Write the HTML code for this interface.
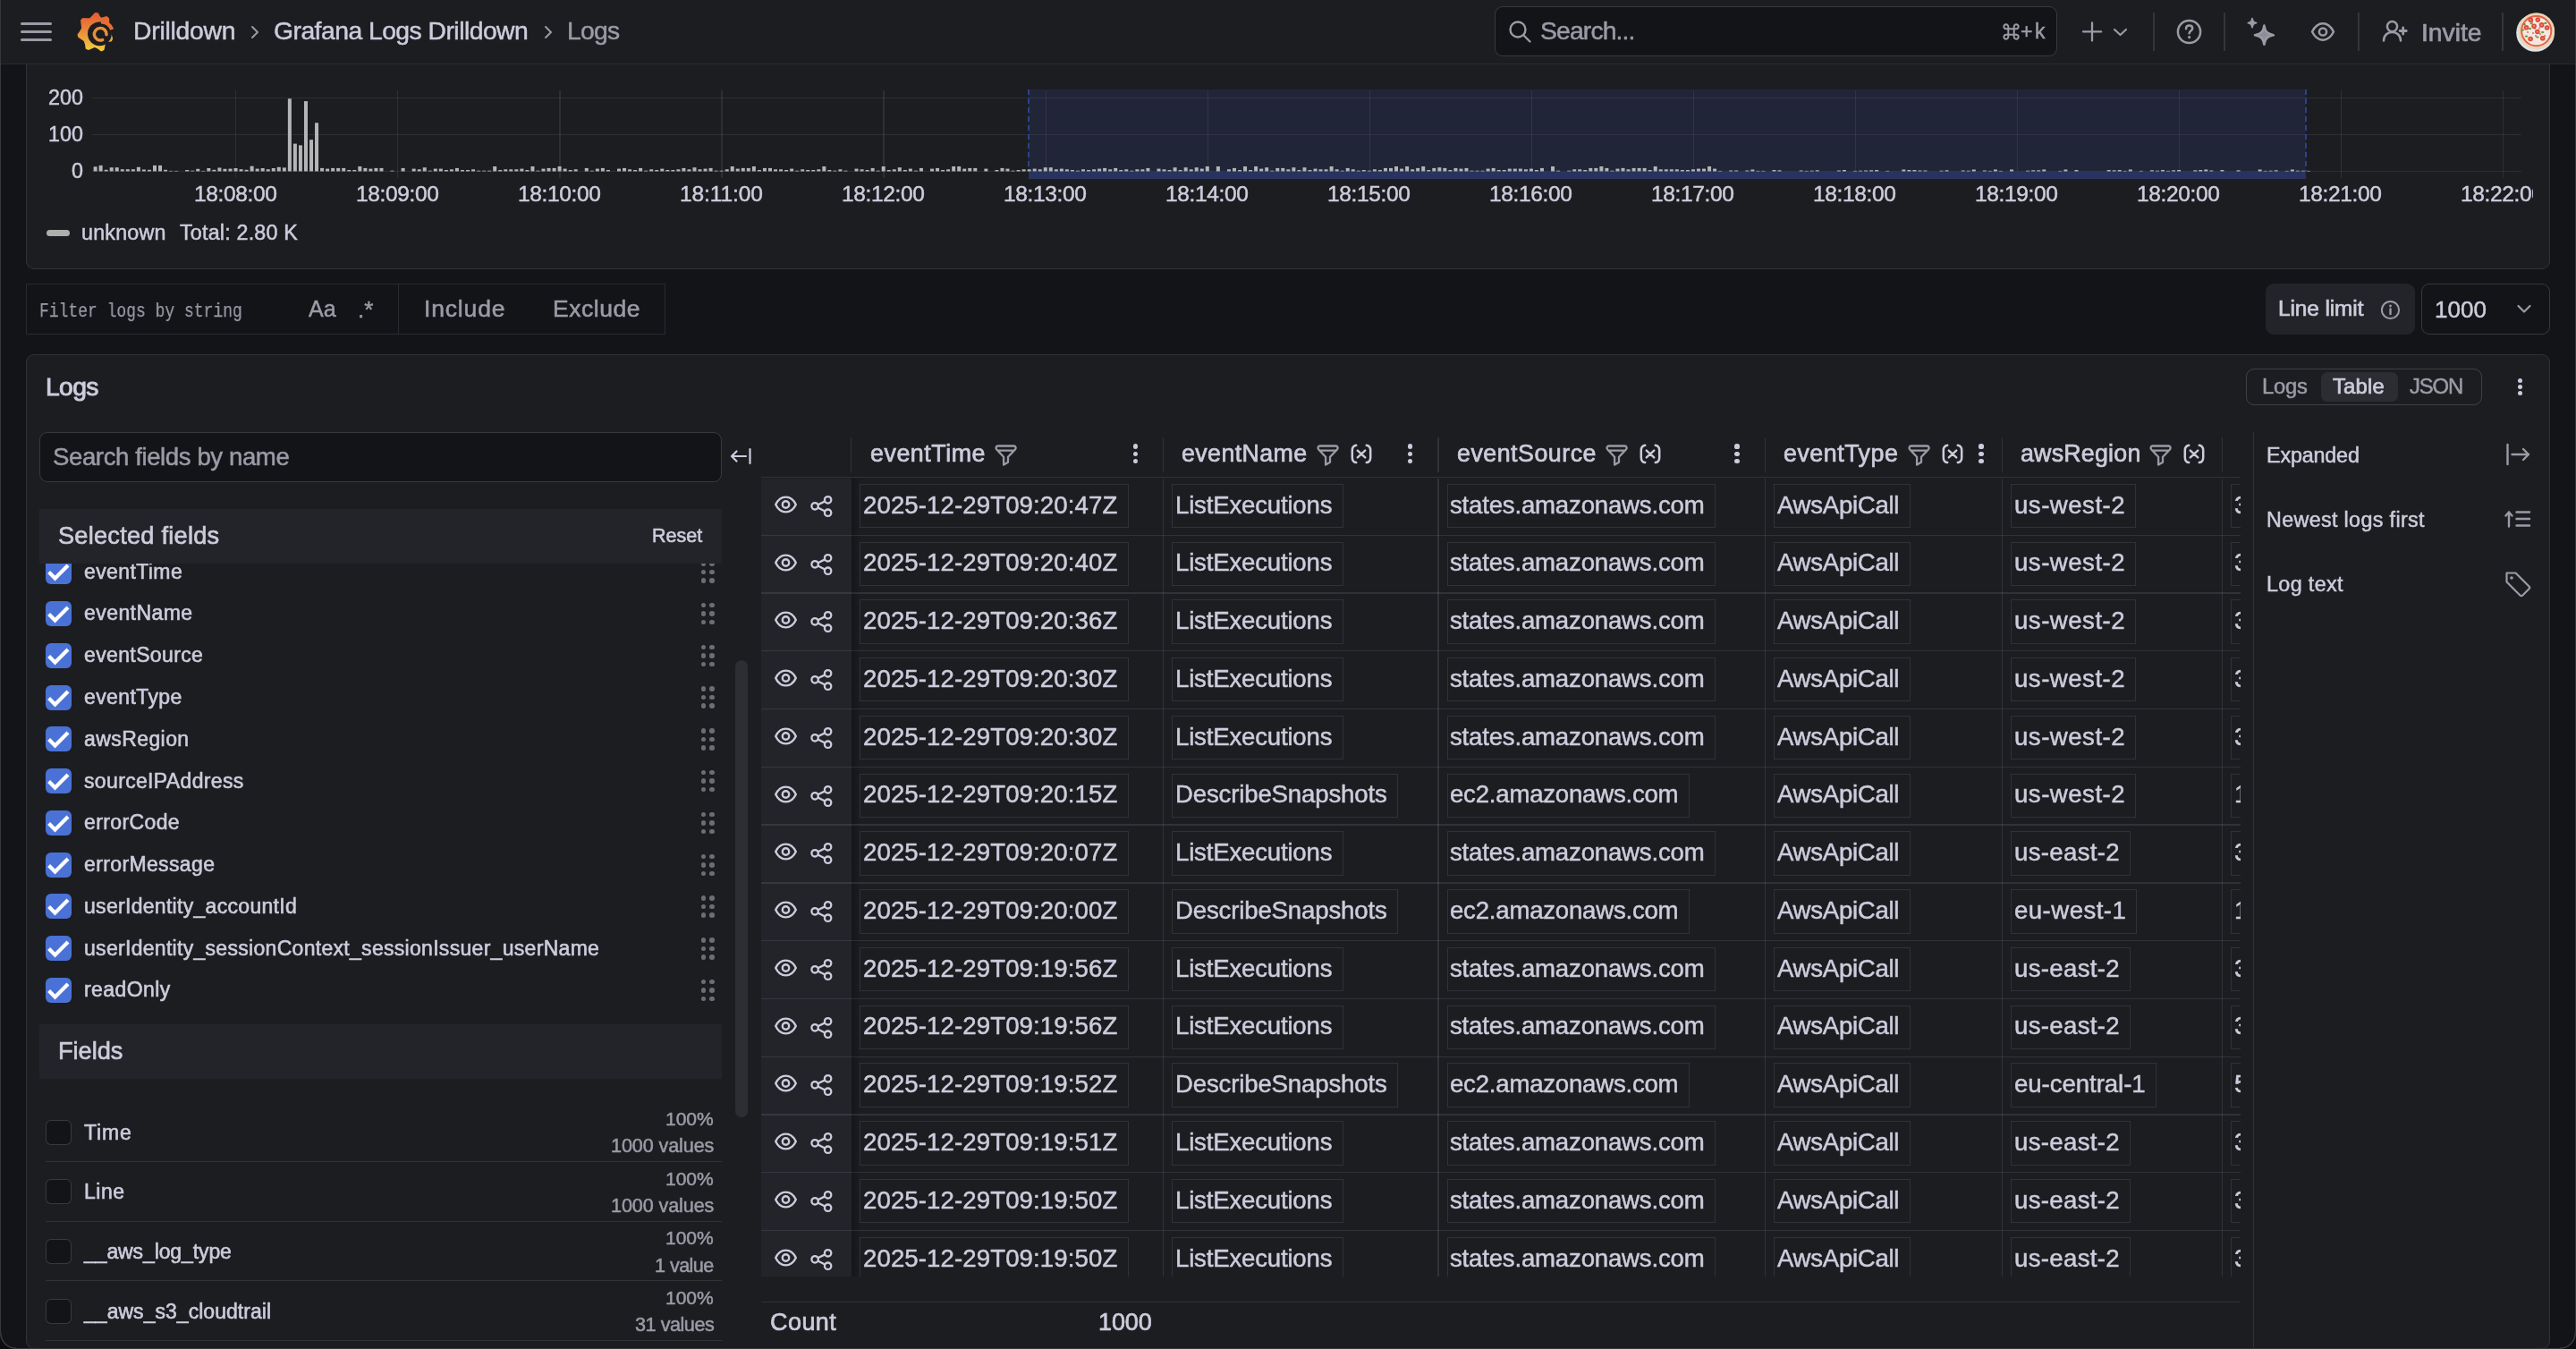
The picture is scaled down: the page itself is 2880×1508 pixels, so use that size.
<!DOCTYPE html><html><head><meta charset="utf-8"><style>
html,body{margin:0;padding:0;}
body{width:2880px;height:1508px;overflow:hidden;position:relative;background:#131418;font-family:"Liberation Sans",sans-serif;}
.t{position:absolute;white-space:nowrap;will-change:transform;}
</style></head><body>
<div style="position:absolute;left:29.00px;top:40.00px;width:2822.00px;height:261.00px;box-sizing:border-box;background:#1c1d21;border:1.5px solid rgba(204,204,220,0.12);border-radius:9px;"></div>
<div style="position:absolute;left:0.00px;top:0.00px;width:2880.00px;height:71.00px;background:#1c1d21;"></div>
<div style="position:absolute;left:0.00px;top:71.00px;width:2880.00px;height:1.00px;background:#2a2b30;"></div>
<div style="position:absolute;left:22.70px;top:24.85px;width:35.80px;height:3.50px;background:#9a9ba6;border-radius:2px;"></div>
<div style="position:absolute;left:22.70px;top:33.85px;width:35.80px;height:3.50px;background:#9a9ba6;border-radius:2px;"></div>
<div style="position:absolute;left:22.70px;top:42.95px;width:35.80px;height:3.50px;background:#9a9ba6;border-radius:2px;"></div>
<svg style="position:absolute;left:80.00px;top:8.00px;" width="54.00" height="54.00" viewBox="80 8 54 54" fill="none"><defs><linearGradient id="lg" x1="0" y1="0" x2="0" y2="1"><stop offset="0" stop-color="#e35a32"/><stop offset="0.45" stop-color="#e8883a"/><stop offset="1" stop-color="#f2cf3c"/></linearGradient></defs>
<path fill="url(#lg)" d="M90.05 22.47 L92.45 20.03 Q97.16 20.61 100.40 20.18 L106.22 13.95 L109.77 14.19 Q111.44 18.02 113.15 19.72 L119.40 18.11 L122.11 20.40 Q122.02 27.56 122.84 32.47 L126.23 43.25 L124.85 46.30 Q120.59 47.01 118.11 48.28 L116.42 56.07 L113.13 57.40 Q108.89 53.98 105.89 53.11 L98.75 55.88 L95.71 54.40 Q95.20 48.92 93.75 45.95 L87.17 41.56 L86.56 38.41 Q89.56 34.65 91.13 31.57 Z"/>
<circle cx="111.4" cy="37.8" r="13.4" fill="#1c1d21"/>
<path d="M113 24.2 A13.4 13.4 0 0 1 125.2 33" stroke="#e36f35" stroke-width="4.4" fill="none"/>
<path d="M114.6 44.6 A6.8 6.8 0 1 1 119 38.6" stroke="#e98f38" stroke-width="3.6" fill="none" stroke-linecap="round"/>
<circle cx="112.2" cy="38.2" r="4.8" fill="#1c1d21"/></svg>
<div class="t" style="left:148.60px;top:20.34px;font-size:28.30px;line-height:28.30px;color:#ccccdc;font-family:'Liberation Sans',sans-serif;letter-spacing:-0.235px;-webkit-text-stroke:0.5px currentColor;">Drilldown</div>
<svg style="position:absolute;left:279.00px;top:28.00px;" width="12.00" height="16.00" viewBox="0 0 12 16" fill="none"><path d="M3 2 L9 8 L3 14" stroke="#9a9ba6" stroke-width="2" stroke-linecap="round" stroke-linejoin="round"/></svg>
<div class="t" style="left:306.10px;top:20.34px;font-size:28.30px;line-height:28.30px;color:#ccccdc;font-family:'Liberation Sans',sans-serif;letter-spacing:-0.521px;-webkit-text-stroke:0.5px currentColor;">Grafana Logs Drilldown</div>
<svg style="position:absolute;left:607.00px;top:28.00px;" width="12.00" height="16.00" viewBox="0 0 12 16" fill="none"><path d="M3 2 L9 8 L3 14" stroke="#9a9ba6" stroke-width="2" stroke-linecap="round" stroke-linejoin="round"/></svg>
<div class="t" style="left:634.10px;top:20.34px;font-size:28.30px;line-height:28.30px;color:#9a9ba6;font-family:'Liberation Sans',sans-serif;letter-spacing:-0.723px;-webkit-text-stroke:0.5px currentColor;">Logs</div>
<div style="position:absolute;left:1671.00px;top:7.00px;width:629.00px;height:56.00px;box-sizing:border-box;background:#131418;border:1.5px solid rgba(204,204,220,0.20);border-radius:9px;"></div>
<svg style="position:absolute;left:1686.00px;top:22.00px;" width="27.00" height="27.00" viewBox="0 0 27 27" fill="none"><circle cx="11" cy="11" r="8.5" stroke="#9a9ba6" stroke-width="2.4"/><path d="M17.5 17.5 L24.5 24.5" stroke="#9a9ba6" stroke-width="2.4" stroke-linecap="round"/></svg>
<div class="t" style="left:1721.60px;top:20.24px;font-size:28.30px;line-height:28.30px;color:#9a9ba6;font-family:'Liberation Sans',sans-serif;letter-spacing:-0.845px;-webkit-text-stroke:0.5px currentColor;">Search...</div>
<svg style="position:absolute;left:2239.00px;top:26.00px;" width="19.00" height="19.00" viewBox="0 0 19 19" fill="none"><path d="M6.3 6.3 H12.7 V12.7 H6.3 Z M6.3 6.3 V3.9 A2.5 2.5 0 1 0 3.8 6.3 Z M12.7 6.3 V3.9 A2.5 2.5 0 1 1 15.2 6.3 Z M6.3 12.7 V15.1 A2.5 2.5 0 1 1 3.8 12.7 Z M12.7 12.7 V15.1 A2.5 2.5 0 1 0 15.2 12.7 Z" stroke="#9a9ba6" stroke-width="2" stroke-linejoin="round"/></svg>
<div class="t" style="left:2258.60px;top:24.13px;font-size:23.00px;line-height:23.00px;color:#9a9ba6;font-family:'Liberation Sans',sans-serif;letter-spacing:2.568px;-webkit-text-stroke:0.5px currentColor;">+k</div>
<svg style="position:absolute;left:2327.00px;top:23.00px;" width="25.00" height="25.00" viewBox="0 0 25 25" fill="none"><path d="M12 2.4 V22.6 M2 12.4 H22.2" stroke="#9a9ba6" stroke-width="2.3" stroke-linecap="round"/></svg>
<svg style="position:absolute;left:2362.00px;top:30.00px;" width="17.00" height="12.00" viewBox="0 0 17 12" fill="none"><path d="M2 3 L8.5 9 L15 3" stroke="#9a9ba6" stroke-width="2.2" stroke-linecap="round" stroke-linejoin="round"/></svg>
<div style="position:absolute;left:2407.00px;top:14.00px;width:2.00px;height:43.00px;background:#34353b;"></div>
<div style="position:absolute;left:2486.00px;top:14.00px;width:2.00px;height:43.00px;background:#34353b;"></div>
<div style="position:absolute;left:2636.00px;top:14.00px;width:2.00px;height:43.00px;background:#34353b;"></div>
<div style="position:absolute;left:2797.00px;top:14.00px;width:2.00px;height:43.00px;background:#34353b;"></div>
<svg style="position:absolute;left:2432.00px;top:20.00px;" width="31.00" height="31.00" viewBox="0 0 31 31" fill="none"><circle cx="15.5" cy="15.5" r="12.6" stroke="#9a9ba6" stroke-width="2.5"/><path d="M12 12.2 C12 9.8 13.6 8.6 15.6 8.6 C17.6 8.6 19.2 9.9 19.2 11.8 C19.2 14.4 15.6 14.6 15.6 17.2" stroke="#9a9ba6" stroke-width="2.5" stroke-linecap="round" fill="none"/><circle cx="15.6" cy="21.6" r="1.6" fill="#9a9ba6"/></svg>
<svg style="position:absolute;left:2508.00px;top:17.00px;" width="40.00" height="37.00" viewBox="0 0 40 37" fill="none"><path d="M23.4 11.6 C24.6 18.6 26.4 20.6 33.8 22.2 C26.4 23.8 24.6 25.8 23.4 32.8 C22.2 25.8 20.4 23.8 13 22.2 C20.4 20.6 22.2 18.6 23.4 11.6 Z" fill="#8c8d97" stroke="#9a9ba6" stroke-width="2.6" stroke-linejoin="round"/><path d="M10 3.6 C10.6 6.8 11.4 7.8 14.6 8.6 C11.4 9.4 10.6 10.4 10 13.6 C9.4 10.4 8.6 9.4 5.4 8.6 C8.6 7.8 9.4 6.8 10 3.6 Z" fill="#9a9ba6" stroke="#9a9ba6" stroke-width="1.8" stroke-linejoin="round"/></svg>
<svg style="position:absolute;left:2582.00px;top:23.00px;" width="30.00" height="25.00" viewBox="0 0 30 25" fill="none"><path d="M3 12.5 C6.3 6 10.5 3.3 15 3.3 C19.5 3.3 23.7 6 27 12.5 C23.7 19 19.5 21.7 15 21.7 C10.5 21.7 6.3 19 3 12.5 Z" stroke="#9a9ba6" stroke-width="2.5" stroke-linejoin="round"/><circle cx="15" cy="12.5" r="4.1" stroke="#9a9ba6" stroke-width="2.5"/></svg>
<svg style="position:absolute;left:2661.00px;top:22.00px;" width="32.00" height="27.00" viewBox="0 0 32 27" fill="none"><circle cx="13.5" cy="7.6" r="5.6" stroke="#9a9ba6" stroke-width="2.5"/><path d="M4 23.6 C4 17.6 8.2 13.9 13.5 13.9 C18.8 13.9 23 17.6 23 23.6" stroke="#9a9ba6" stroke-width="2.5" stroke-linecap="round"/><path d="M25.7 8.9 V16.1 M22.1 12.5 H29.3" stroke="#9a9ba6" stroke-width="2.8" stroke-linecap="round"/></svg>
<div class="t" style="left:2706.60px;top:21.74px;font-size:28.30px;line-height:28.30px;color:#9a9ba6;font-family:'Liberation Sans',sans-serif;letter-spacing:-0.028px;-webkit-text-stroke:0.7px currentColor;">Invite</div>
<svg style="position:absolute;left:2812.00px;top:12.00px;" width="47.00" height="47.00" viewBox="0 0 47 47" fill="none"><ellipse cx="22.6" cy="24.6" rx="21.4" ry="21.2" fill="#dbe4e9"/><circle cx="23.7" cy="22.6" r="20.4" fill="#edd3b6"/><circle cx="23.7" cy="22.6" r="17.6" fill="#e46246"/><circle cx="23.7" cy="22.6" r="15.6" fill="#f1e9e1"/><circle cx="19.0" cy="12.5" r="1" fill="#e66a55"/><circle cx="22.0" cy="20.0" r="1" fill="#e66a55"/><circle cx="27.0" cy="19.5" r="1" fill="#e66a55"/><circle cx="20.0" cy="25.0" r="1" fill="#e66a55"/><circle cx="14.0" cy="24.0" r="1" fill="#e66a55"/><circle cx="28.0" cy="26.0" r="1" fill="#e66a55"/><circle cx="33.0" cy="28.0" r="1" fill="#e66a55"/><circle cx="23.0" cy="28.0" r="1" fill="#e66a55"/><circle cx="17.3" cy="10.3" r="2.8" fill="#df4a36"/><circle cx="17.3" cy="10.3" r="1.1" fill="#f08a78"/><circle cx="25.3" cy="10.1" r="2.8" fill="#df4a36"/><circle cx="25.3" cy="10.1" r="1.1" fill="#f08a78"/><circle cx="12.5" cy="18.8" r="2.8" fill="#df4a36"/><circle cx="12.5" cy="18.8" r="1.1" fill="#f08a78"/><circle cx="21.1" cy="17.2" r="2.8" fill="#df4a36"/><circle cx="21.1" cy="17.2" r="1.1" fill="#f08a78"/><circle cx="29.6" cy="15.9" r="2.8" fill="#df4a36"/><circle cx="29.6" cy="15.9" r="1.1" fill="#f08a78"/><circle cx="35.6" cy="19.0" r="2.8" fill="#df4a36"/><circle cx="35.6" cy="19.0" r="1.1" fill="#f08a78"/><circle cx="24.9" cy="23.5" r="2.8" fill="#df4a36"/><circle cx="24.9" cy="23.5" r="1.1" fill="#f08a78"/><circle cx="17.1" cy="31.5" r="2.8" fill="#df4a36"/><circle cx="17.1" cy="31.5" r="1.1" fill="#f08a78"/><circle cx="30.7" cy="30.8" r="2.8" fill="#df4a36"/><circle cx="30.7" cy="30.8" r="1.1" fill="#f08a78"/><ellipse cx="10.2" cy="15.2" rx="1.7" ry="1.1" fill="#5d9a45"/><ellipse cx="18.2" cy="14.3" rx="1.7" ry="1.1" fill="#5d9a45"/><ellipse cx="33.8" cy="13.9" rx="1.7" ry="1.1" fill="#5d9a45"/><ellipse cx="8.5" cy="21.5" rx="1.7" ry="1.1" fill="#5d9a45"/><ellipse cx="16.5" cy="20.1" rx="1.7" ry="1.1" fill="#5d9a45"/><ellipse cx="30.7" cy="24.1" rx="1.7" ry="1.1" fill="#5d9a45"/><ellipse cx="12.5" cy="28.6" rx="1.7" ry="1.1" fill="#5d9a45"/><ellipse cx="24.9" cy="29.5" rx="1.7" ry="1.1" fill="#5d9a45"/></svg>
<div style="position:absolute;left:103.00px;top:109.00px;width:2715.50px;height:1.20px;background:rgba(204,204,220,0.10);"></div>
<div style="position:absolute;left:103.00px;top:150.10px;width:2715.50px;height:1.20px;background:rgba(204,204,220,0.10);"></div>
<div style="position:absolute;left:103.00px;top:191.00px;width:2715.50px;height:1.20px;background:rgba(204,204,220,0.10);"></div>
<div style="position:absolute;left:263.20px;top:101.00px;width:1.20px;height:98.00px;background:rgba(204,204,220,0.10);"></div>
<div style="position:absolute;left:444.26px;top:101.00px;width:1.20px;height:98.00px;background:rgba(204,204,220,0.10);"></div>
<div style="position:absolute;left:625.32px;top:101.00px;width:1.20px;height:98.00px;background:rgba(204,204,220,0.10);"></div>
<div style="position:absolute;left:806.38px;top:101.00px;width:1.20px;height:98.00px;background:rgba(204,204,220,0.10);"></div>
<div style="position:absolute;left:987.44px;top:101.00px;width:1.20px;height:98.00px;background:rgba(204,204,220,0.10);"></div>
<div style="position:absolute;left:1168.50px;top:101.00px;width:1.20px;height:98.00px;background:rgba(204,204,220,0.10);"></div>
<div style="position:absolute;left:1349.56px;top:101.00px;width:1.20px;height:98.00px;background:rgba(204,204,220,0.10);"></div>
<div style="position:absolute;left:1530.62px;top:101.00px;width:1.20px;height:98.00px;background:rgba(204,204,220,0.10);"></div>
<div style="position:absolute;left:1711.68px;top:101.00px;width:1.20px;height:98.00px;background:rgba(204,204,220,0.10);"></div>
<div style="position:absolute;left:1892.74px;top:101.00px;width:1.20px;height:98.00px;background:rgba(204,204,220,0.10);"></div>
<div style="position:absolute;left:2073.80px;top:101.00px;width:1.20px;height:98.00px;background:rgba(204,204,220,0.10);"></div>
<div style="position:absolute;left:2254.86px;top:101.00px;width:1.20px;height:98.00px;background:rgba(204,204,220,0.10);"></div>
<div style="position:absolute;left:2435.92px;top:101.00px;width:1.20px;height:98.00px;background:rgba(204,204,220,0.10);"></div>
<div style="position:absolute;left:2616.98px;top:101.00px;width:1.20px;height:98.00px;background:rgba(204,204,220,0.10);"></div>
<div style="position:absolute;left:2798.04px;top:101.00px;width:1.20px;height:98.00px;background:rgba(204,204,220,0.10);"></div>
<div style="position:absolute;left:1150.00px;top:100.20px;width:1428.00px;height:99.40px;background:rgba(70,95,215,0.13);"></div>
<div style="position:absolute;left:1150.00px;top:191.20px;width:1428.00px;height:8.50px;background:#28345f;"></div>
<div style="position:absolute;left:1149.00px;top:100.00px;width:2.00px;height:91.00px;background:repeating-linear-gradient(to bottom,#2c4189 0px,#2c4189 6px,transparent 6px,transparent 10px);"></div>
<div style="position:absolute;left:2577.00px;top:100.00px;width:2.00px;height:91.00px;background:repeating-linear-gradient(to bottom,#2c4189 0px,#2c4189 6px,transparent 6px,transparent 10px);"></div>
<svg style="position:absolute;left:103.00px;top:100.00px;" width="2480.00" height="92.00" viewBox="0 0 2480 92" fill="none"><g fill="#b4b5b6"><rect x="1.60" y="86.30" width="4" height="5.20"/><rect x="7.63" y="84.90" width="4" height="6.60"/><rect x="13.67" y="89.80" width="4" height="1.70"/><rect x="19.70" y="87.20" width="4" height="4.30"/><rect x="25.74" y="87.20" width="4" height="4.30"/><rect x="31.78" y="89.20" width="4" height="2.30"/><rect x="37.81" y="89.20" width="4" height="2.30"/><rect x="43.84" y="89.20" width="4" height="2.30"/><rect x="49.88" y="86.80" width="4" height="4.70"/><rect x="55.91" y="89.50" width="4" height="2.00"/><rect x="61.95" y="89.80" width="4" height="1.70"/><rect x="67.99" y="84.90" width="4" height="6.60"/><rect x="74.02" y="84.90" width="4" height="6.60"/><rect x="80.06" y="89.80" width="4" height="1.70"/><rect x="86.09" y="90.90" width="4" height="0.60"/><rect x="92.12" y="90.90" width="4" height="0.60"/><rect x="104.19" y="90.00" width="4" height="1.50"/><rect x="110.23" y="90.70" width="4" height="0.80"/><rect x="116.26" y="88.80" width="4" height="2.70"/><rect x="122.30" y="90.90" width="4" height="0.60"/><rect x="128.33" y="88.00" width="4" height="3.50"/><rect x="134.37" y="89.80" width="4" height="1.70"/><rect x="140.41" y="87.50" width="4" height="4.00"/><rect x="146.44" y="88.80" width="4" height="2.70"/><rect x="152.48" y="88.60" width="4" height="2.90"/><rect x="158.51" y="88.00" width="4" height="3.50"/><rect x="164.54" y="89.20" width="4" height="2.30"/><rect x="170.58" y="89.80" width="4" height="1.70"/><rect x="176.62" y="85.70" width="4" height="5.80"/><rect x="182.65" y="88.60" width="4" height="2.90"/><rect x="188.69" y="88.00" width="4" height="3.50"/><rect x="194.72" y="89.20" width="4" height="2.30"/><rect x="200.75" y="88.00" width="4" height="3.50"/><rect x="206.79" y="86.80" width="4" height="4.70"/><rect x="212.82" y="87.40" width="4" height="4.10"/><rect x="218.86" y="10.30" width="4" height="81.20"/><rect x="224.89" y="60.60" width="4" height="30.90"/><rect x="230.93" y="62.40" width="4" height="29.10"/><rect x="236.97" y="13.10" width="4" height="78.40"/><rect x="243.00" y="56.20" width="4" height="35.30"/><rect x="249.03" y="37.30" width="4" height="54.20"/><rect x="255.07" y="87.90" width="4" height="3.60"/><rect x="261.11" y="88.60" width="4" height="2.90"/><rect x="267.14" y="87.90" width="4" height="3.60"/><rect x="273.17" y="87.90" width="4" height="3.60"/><rect x="279.21" y="87.90" width="4" height="3.60"/><rect x="285.25" y="90.00" width="4" height="1.50"/><rect x="291.28" y="90.00" width="4" height="1.50"/><rect x="297.32" y="86.00" width="4" height="5.50"/><rect x="303.35" y="87.90" width="4" height="3.60"/><rect x="309.38" y="88.60" width="4" height="2.90"/><rect x="315.42" y="87.90" width="4" height="3.60"/><rect x="321.46" y="87.90" width="4" height="3.60"/><rect x="333.52" y="90.70" width="4" height="0.80"/><rect x="345.60" y="87.90" width="4" height="3.60"/><rect x="357.66" y="88.60" width="4" height="2.90"/><rect x="363.70" y="89.30" width="4" height="2.20"/><rect x="369.74" y="87.20" width="4" height="4.30"/><rect x="375.77" y="90.70" width="4" height="0.80"/><rect x="381.80" y="88.60" width="4" height="2.90"/><rect x="387.84" y="88.60" width="4" height="2.90"/><rect x="393.88" y="90.00" width="4" height="1.50"/><rect x="399.91" y="89.30" width="4" height="2.20"/><rect x="405.95" y="87.90" width="4" height="3.60"/><rect x="411.98" y="90.00" width="4" height="1.50"/><rect x="418.01" y="90.00" width="4" height="1.50"/><rect x="424.05" y="89.30" width="4" height="2.20"/><rect x="430.09" y="90.70" width="4" height="0.80"/><rect x="436.12" y="90.70" width="4" height="0.80"/><rect x="442.15" y="90.70" width="4" height="0.80"/><rect x="448.19" y="86.00" width="4" height="5.50"/><rect x="454.23" y="90.00" width="4" height="1.50"/><rect x="460.26" y="89.30" width="4" height="2.20"/><rect x="466.29" y="89.30" width="4" height="2.20"/><rect x="472.33" y="89.30" width="4" height="2.20"/><rect x="478.37" y="88.60" width="4" height="2.90"/><rect x="484.40" y="90.00" width="4" height="1.50"/><rect x="490.44" y="86.00" width="4" height="5.50"/><rect x="496.47" y="90.70" width="4" height="0.80"/><rect x="502.50" y="88.60" width="4" height="2.90"/><rect x="508.54" y="87.90" width="4" height="3.60"/><rect x="514.58" y="87.90" width="4" height="3.60"/><rect x="520.61" y="86.00" width="4" height="5.50"/><rect x="526.64" y="88.60" width="4" height="2.90"/><rect x="532.68" y="90.00" width="4" height="1.50"/><rect x="538.72" y="89.30" width="4" height="2.20"/><rect x="550.79" y="87.90" width="4" height="3.60"/><rect x="556.82" y="90.70" width="4" height="0.80"/><rect x="562.86" y="88.60" width="4" height="2.90"/><rect x="568.89" y="87.90" width="4" height="3.60"/><rect x="574.93" y="90.00" width="4" height="1.50"/><rect x="587.00" y="88.60" width="4" height="2.90"/><rect x="593.03" y="87.90" width="4" height="3.60"/><rect x="599.07" y="89.30" width="4" height="2.20"/><rect x="605.10" y="90.00" width="4" height="1.50"/><rect x="611.13" y="87.90" width="4" height="3.60"/><rect x="617.17" y="90.70" width="4" height="0.80"/><rect x="623.21" y="89.30" width="4" height="2.20"/><rect x="629.24" y="90.00" width="4" height="1.50"/><rect x="635.28" y="88.60" width="4" height="2.90"/><rect x="641.31" y="90.00" width="4" height="1.50"/><rect x="647.35" y="90.00" width="4" height="1.50"/><rect x="653.38" y="89.30" width="4" height="2.20"/><rect x="659.42" y="87.90" width="4" height="3.60"/><rect x="665.45" y="89.30" width="4" height="2.20"/><rect x="671.49" y="87.20" width="4" height="4.30"/><rect x="677.52" y="89.30" width="4" height="2.20"/><rect x="683.56" y="88.60" width="4" height="2.90"/><rect x="689.59" y="87.90" width="4" height="3.60"/><rect x="695.62" y="90.70" width="4" height="0.80"/><rect x="701.66" y="90.70" width="4" height="0.80"/><rect x="707.70" y="89.30" width="4" height="2.20"/><rect x="713.73" y="86.00" width="4" height="5.50"/><rect x="719.76" y="88.60" width="4" height="2.90"/><rect x="725.80" y="87.90" width="4" height="3.60"/><rect x="731.84" y="87.90" width="4" height="3.60"/><rect x="737.87" y="86.00" width="4" height="5.50"/><rect x="743.91" y="90.00" width="4" height="1.50"/><rect x="749.94" y="87.90" width="4" height="3.60"/><rect x="755.98" y="87.90" width="4" height="3.60"/><rect x="762.01" y="89.30" width="4" height="2.20"/><rect x="768.05" y="89.30" width="4" height="2.20"/><rect x="774.08" y="90.00" width="4" height="1.50"/><rect x="780.12" y="88.60" width="4" height="2.90"/><rect x="786.15" y="90.70" width="4" height="0.80"/><rect x="792.19" y="89.30" width="4" height="2.20"/><rect x="798.22" y="90.00" width="4" height="1.50"/><rect x="804.25" y="90.00" width="4" height="1.50"/><rect x="810.29" y="89.30" width="4" height="2.20"/><rect x="816.33" y="86.00" width="4" height="5.50"/><rect x="822.36" y="90.00" width="4" height="1.50"/><rect x="828.40" y="90.70" width="4" height="0.80"/><rect x="834.43" y="89.30" width="4" height="2.20"/><rect x="840.47" y="90.70" width="4" height="0.80"/><rect x="852.54" y="88.60" width="4" height="2.90"/><rect x="858.57" y="89.30" width="4" height="2.20"/><rect x="864.61" y="90.00" width="4" height="1.50"/><rect x="870.64" y="87.90" width="4" height="3.60"/><rect x="876.68" y="90.70" width="4" height="0.80"/><rect x="882.71" y="86.00" width="4" height="5.50"/><rect x="888.75" y="90.00" width="4" height="1.50"/><rect x="894.78" y="89.30" width="4" height="2.20"/><rect x="900.82" y="87.20" width="4" height="4.30"/><rect x="906.85" y="90.00" width="4" height="1.50"/><rect x="912.88" y="88.60" width="4" height="2.90"/><rect x="918.92" y="90.70" width="4" height="0.80"/><rect x="924.95" y="87.90" width="4" height="3.60"/><rect x="937.03" y="88.60" width="4" height="2.90"/><rect x="943.06" y="87.90" width="4" height="3.60"/><rect x="949.10" y="90.00" width="4" height="1.50"/><rect x="955.13" y="89.30" width="4" height="2.20"/><rect x="961.16" y="86.00" width="4" height="5.50"/><rect x="967.20" y="86.00" width="4" height="5.50"/><rect x="973.23" y="88.60" width="4" height="2.90"/><rect x="979.27" y="87.90" width="4" height="3.60"/><rect x="985.31" y="87.90" width="4" height="3.60"/><rect x="997.38" y="88.60" width="4" height="2.90"/><rect x="1009.44" y="90.00" width="4" height="1.50"/><rect x="1015.48" y="87.90" width="4" height="3.60"/><rect x="1021.52" y="88.60" width="4" height="2.90"/><rect x="1027.55" y="90.70" width="4" height="0.80"/><rect x="1033.59" y="90.00" width="4" height="1.50"/><rect x="1039.62" y="89.30" width="4" height="2.20"/><rect x="1045.65" y="89.30" width="4" height="2.20"/><rect x="1051.69" y="88.60" width="4" height="2.90"/><rect x="1057.72" y="89.30" width="4" height="2.20"/><rect x="1063.76" y="87.20" width="4" height="4.30"/><rect x="1069.79" y="87.20" width="4" height="4.30"/><rect x="1075.83" y="89.30" width="4" height="2.20"/><rect x="1081.87" y="88.60" width="4" height="2.90"/><rect x="1087.90" y="89.30" width="4" height="2.20"/><rect x="1093.93" y="90.00" width="4" height="1.50"/><rect x="1099.97" y="90.70" width="4" height="0.80"/><rect x="1106.00" y="89.30" width="4" height="2.20"/><rect x="1112.04" y="90.00" width="4" height="1.50"/><rect x="1118.08" y="89.30" width="4" height="2.20"/><rect x="1124.11" y="88.60" width="4" height="2.90"/><rect x="1130.14" y="87.90" width="4" height="3.60"/><rect x="1136.18" y="89.30" width="4" height="2.20"/><rect x="1142.21" y="87.90" width="4" height="3.60"/><rect x="1148.25" y="90.00" width="4" height="1.50"/><rect x="1154.28" y="89.30" width="4" height="2.20"/><rect x="1160.32" y="90.70" width="4" height="0.80"/><rect x="1166.36" y="89.30" width="4" height="2.20"/><rect x="1172.39" y="89.30" width="4" height="2.20"/><rect x="1178.42" y="87.90" width="4" height="3.60"/><rect x="1190.49" y="88.60" width="4" height="2.90"/><rect x="1196.53" y="89.30" width="4" height="2.20"/><rect x="1202.56" y="90.00" width="4" height="1.50"/><rect x="1208.60" y="87.20" width="4" height="4.30"/><rect x="1214.63" y="90.00" width="4" height="1.50"/><rect x="1220.67" y="87.20" width="4" height="4.30"/><rect x="1226.70" y="89.30" width="4" height="2.20"/><rect x="1232.74" y="87.20" width="4" height="4.30"/><rect x="1238.77" y="88.60" width="4" height="2.90"/><rect x="1244.81" y="86.00" width="4" height="5.50"/><rect x="1256.88" y="86.00" width="4" height="5.50"/><rect x="1268.95" y="89.30" width="4" height="2.20"/><rect x="1274.98" y="87.90" width="4" height="3.60"/><rect x="1281.02" y="90.00" width="4" height="1.50"/><rect x="1287.05" y="86.00" width="4" height="5.50"/><rect x="1293.09" y="90.00" width="4" height="1.50"/><rect x="1299.12" y="86.00" width="4" height="5.50"/><rect x="1305.16" y="88.60" width="4" height="2.90"/><rect x="1311.19" y="87.20" width="4" height="4.30"/><rect x="1317.23" y="90.70" width="4" height="0.80"/><rect x="1323.26" y="87.90" width="4" height="3.60"/><rect x="1329.30" y="87.90" width="4" height="3.60"/><rect x="1335.34" y="89.30" width="4" height="2.20"/><rect x="1341.37" y="87.20" width="4" height="4.30"/><rect x="1347.40" y="90.00" width="4" height="1.50"/><rect x="1353.44" y="87.20" width="4" height="4.30"/><rect x="1359.47" y="90.00" width="4" height="1.50"/><rect x="1365.51" y="88.60" width="4" height="2.90"/><rect x="1371.54" y="89.30" width="4" height="2.20"/><rect x="1377.58" y="89.30" width="4" height="2.20"/><rect x="1383.62" y="86.00" width="4" height="5.50"/><rect x="1389.65" y="89.30" width="4" height="2.20"/><rect x="1395.68" y="90.70" width="4" height="0.80"/><rect x="1401.72" y="87.90" width="4" height="3.60"/><rect x="1407.75" y="89.30" width="4" height="2.20"/><rect x="1413.79" y="90.70" width="4" height="0.80"/><rect x="1419.83" y="90.00" width="4" height="1.50"/><rect x="1425.86" y="90.70" width="4" height="0.80"/><rect x="1431.89" y="89.30" width="4" height="2.20"/><rect x="1437.93" y="90.00" width="4" height="1.50"/><rect x="1443.96" y="87.90" width="4" height="3.60"/><rect x="1450.00" y="87.90" width="4" height="3.60"/><rect x="1456.03" y="86.00" width="4" height="5.50"/><rect x="1462.07" y="88.60" width="4" height="2.90"/><rect x="1468.11" y="86.00" width="4" height="5.50"/><rect x="1474.14" y="89.30" width="4" height="2.20"/><rect x="1480.17" y="87.90" width="4" height="3.60"/><rect x="1486.21" y="86.00" width="4" height="5.50"/><rect x="1492.24" y="90.00" width="4" height="1.50"/><rect x="1498.28" y="87.90" width="4" height="3.60"/><rect x="1504.32" y="87.20" width="4" height="4.30"/><rect x="1510.35" y="87.90" width="4" height="3.60"/><rect x="1516.38" y="90.00" width="4" height="1.50"/><rect x="1522.42" y="87.90" width="4" height="3.60"/><rect x="1528.45" y="88.60" width="4" height="2.90"/><rect x="1534.49" y="87.90" width="4" height="3.60"/><rect x="1540.52" y="90.70" width="4" height="0.80"/><rect x="1546.56" y="90.70" width="4" height="0.80"/><rect x="1552.60" y="90.70" width="4" height="0.80"/><rect x="1558.63" y="88.60" width="4" height="2.90"/><rect x="1564.66" y="87.90" width="4" height="3.60"/><rect x="1570.70" y="90.00" width="4" height="1.50"/><rect x="1576.73" y="90.00" width="4" height="1.50"/><rect x="1582.77" y="88.60" width="4" height="2.90"/><rect x="1588.80" y="88.60" width="4" height="2.90"/><rect x="1594.84" y="88.60" width="4" height="2.90"/><rect x="1600.88" y="89.30" width="4" height="2.20"/><rect x="1606.91" y="88.60" width="4" height="2.90"/><rect x="1612.94" y="90.00" width="4" height="1.50"/><rect x="1618.98" y="87.90" width="4" height="3.60"/><rect x="1631.05" y="86.00" width="4" height="5.50"/><rect x="1637.09" y="90.70" width="4" height="0.80"/><rect x="1649.15" y="90.70" width="4" height="0.80"/><rect x="1655.19" y="89.30" width="4" height="2.20"/><rect x="1661.22" y="89.30" width="4" height="2.20"/><rect x="1667.26" y="90.00" width="4" height="1.50"/><rect x="1673.29" y="87.90" width="4" height="3.60"/><rect x="1679.33" y="87.90" width="4" height="3.60"/><rect x="1685.37" y="86.00" width="4" height="5.50"/><rect x="1691.40" y="87.90" width="4" height="3.60"/><rect x="1697.43" y="90.70" width="4" height="0.80"/><rect x="1703.47" y="88.60" width="4" height="2.90"/><rect x="1709.50" y="87.90" width="4" height="3.60"/><rect x="1715.54" y="89.30" width="4" height="2.20"/><rect x="1721.58" y="87.90" width="4" height="3.60"/><rect x="1727.61" y="87.90" width="4" height="3.60"/><rect x="1733.64" y="87.90" width="4" height="3.60"/><rect x="1739.68" y="90.00" width="4" height="1.50"/><rect x="1745.71" y="86.00" width="4" height="5.50"/><rect x="1751.75" y="89.30" width="4" height="2.20"/><rect x="1757.78" y="89.30" width="4" height="2.20"/><rect x="1763.82" y="89.30" width="4" height="2.20"/><rect x="1769.86" y="89.30" width="4" height="2.20"/><rect x="1775.89" y="90.00" width="4" height="1.50"/><rect x="1781.92" y="90.00" width="4" height="1.50"/><rect x="1787.96" y="89.30" width="4" height="2.20"/><rect x="1793.99" y="88.60" width="4" height="2.90"/><rect x="1800.03" y="88.60" width="4" height="2.90"/><rect x="1806.07" y="86.00" width="4" height="5.50"/><rect x="1812.10" y="88.60" width="4" height="2.90"/><rect x="1818.13" y="90.90" width="4" height="0.60"/><rect x="1830.20" y="90.50" width="4" height="1.00"/><rect x="1836.24" y="90.50" width="4" height="1.00"/><rect x="1848.31" y="90.50" width="4" height="1.00"/><rect x="1854.35" y="89.50" width="4" height="2.00"/><rect x="1860.38" y="90.90" width="4" height="0.60"/><rect x="1866.41" y="90.90" width="4" height="0.60"/><rect x="1878.48" y="90.00" width="4" height="1.50"/><rect x="1884.52" y="90.30" width="4" height="1.20"/><rect x="1908.66" y="90.50" width="4" height="1.00"/><rect x="1914.69" y="90.90" width="4" height="0.60"/><rect x="1920.73" y="90.70" width="4" height="0.80"/><rect x="1926.76" y="90.30" width="4" height="1.20"/><rect x="1950.91" y="90.50" width="4" height="1.00"/><rect x="1956.94" y="90.00" width="4" height="1.50"/><rect x="1969.01" y="90.90" width="4" height="0.60"/><rect x="1975.05" y="90.70" width="4" height="0.80"/><rect x="1981.08" y="90.50" width="4" height="1.00"/><rect x="1987.12" y="90.30" width="4" height="1.20"/><rect x="1993.15" y="90.00" width="4" height="1.50"/><rect x="2005.22" y="90.90" width="4" height="0.60"/><rect x="2023.33" y="89.50" width="4" height="2.00"/><rect x="2029.36" y="90.00" width="4" height="1.50"/><rect x="2035.39" y="90.00" width="4" height="1.50"/><rect x="2041.43" y="90.50" width="4" height="1.00"/><rect x="2047.47" y="90.50" width="4" height="1.00"/><rect x="2065.57" y="90.70" width="4" height="0.80"/><rect x="2071.61" y="90.30" width="4" height="1.20"/><rect x="2089.71" y="90.50" width="4" height="1.00"/><rect x="2095.74" y="90.70" width="4" height="0.80"/><rect x="2101.78" y="89.50" width="4" height="2.00"/><rect x="2113.85" y="90.50" width="4" height="1.00"/><rect x="2119.88" y="90.90" width="4" height="0.60"/><rect x="2125.92" y="89.50" width="4" height="2.00"/><rect x="2131.95" y="90.90" width="4" height="0.60"/><rect x="2144.03" y="89.50" width="4" height="2.00"/><rect x="2162.13" y="90.70" width="4" height="0.80"/><rect x="2168.16" y="90.30" width="4" height="1.20"/><rect x="2174.20" y="90.30" width="4" height="1.20"/><rect x="2180.24" y="89.50" width="4" height="2.00"/><rect x="2198.34" y="90.90" width="4" height="0.60"/><rect x="2204.38" y="89.50" width="4" height="2.00"/><rect x="2216.45" y="90.00" width="4" height="1.50"/><rect x="2252.65" y="90.00" width="4" height="1.50"/><rect x="2258.69" y="90.30" width="4" height="1.20"/><rect x="2264.72" y="90.00" width="4" height="1.50"/><rect x="2270.76" y="90.90" width="4" height="0.60"/><rect x="2276.80" y="89.50" width="4" height="2.00"/><rect x="2288.86" y="90.90" width="4" height="0.60"/><rect x="2300.93" y="90.30" width="4" height="1.20"/><rect x="2306.97" y="90.70" width="4" height="0.80"/><rect x="2313.01" y="90.00" width="4" height="1.50"/><rect x="2319.04" y="90.90" width="4" height="0.60"/><rect x="2325.07" y="90.30" width="4" height="1.20"/><rect x="2331.11" y="90.00" width="4" height="1.50"/><rect x="2349.22" y="90.30" width="4" height="1.20"/><rect x="2355.25" y="90.00" width="4" height="1.50"/><rect x="2361.28" y="89.50" width="4" height="2.00"/><rect x="2367.32" y="90.50" width="4" height="1.00"/><rect x="2379.39" y="90.00" width="4" height="1.50"/><rect x="2397.49" y="90.30" width="4" height="1.20"/><rect x="2421.63" y="89.50" width="4" height="2.00"/><rect x="2427.67" y="90.90" width="4" height="0.60"/><rect x="2433.70" y="90.70" width="4" height="0.80"/><rect x="2439.74" y="90.30" width="4" height="1.20"/><rect x="2451.81" y="90.90" width="4" height="0.60"/><rect x="2457.84" y="89.50" width="4" height="2.00"/><rect x="2463.88" y="90.70" width="4" height="0.80"/><rect x="2469.91" y="90.70" width="4" height="0.80"/><rect x="2475.95" y="90.90" width="4" height="0.60"/></g></svg>
<div class="t" style="left:216.60px;top:205.26px;font-size:24.50px;line-height:24.50px;color:#ccccdc;font-family:'Liberation Sans',sans-serif;letter-spacing:-0.353px;-webkit-text-stroke:0.5px currentColor;">18:08:00</div>
<div class="t" style="left:397.66px;top:205.26px;font-size:24.50px;line-height:24.50px;color:#ccccdc;font-family:'Liberation Sans',sans-serif;letter-spacing:-0.353px;-webkit-text-stroke:0.5px currentColor;">18:09:00</div>
<div class="t" style="left:578.72px;top:205.26px;font-size:24.50px;line-height:24.50px;color:#ccccdc;font-family:'Liberation Sans',sans-serif;letter-spacing:-0.353px;-webkit-text-stroke:0.5px currentColor;">18:10:00</div>
<div class="t" style="left:759.78px;top:205.26px;font-size:24.50px;line-height:24.50px;color:#ccccdc;font-family:'Liberation Sans',sans-serif;letter-spacing:-0.093px;-webkit-text-stroke:0.5px currentColor;">18:11:00</div>
<div class="t" style="left:940.84px;top:205.26px;font-size:24.50px;line-height:24.50px;color:#ccccdc;font-family:'Liberation Sans',sans-serif;letter-spacing:-0.353px;-webkit-text-stroke:0.5px currentColor;">18:12:00</div>
<div class="t" style="left:1121.90px;top:205.26px;font-size:24.50px;line-height:24.50px;color:#ccccdc;font-family:'Liberation Sans',sans-serif;letter-spacing:-0.353px;-webkit-text-stroke:0.5px currentColor;">18:13:00</div>
<div class="t" style="left:1302.96px;top:205.26px;font-size:24.50px;line-height:24.50px;color:#ccccdc;font-family:'Liberation Sans',sans-serif;letter-spacing:-0.353px;-webkit-text-stroke:0.5px currentColor;">18:14:00</div>
<div class="t" style="left:1484.02px;top:205.26px;font-size:24.50px;line-height:24.50px;color:#ccccdc;font-family:'Liberation Sans',sans-serif;letter-spacing:-0.353px;-webkit-text-stroke:0.5px currentColor;">18:15:00</div>
<div class="t" style="left:1665.08px;top:205.26px;font-size:24.50px;line-height:24.50px;color:#ccccdc;font-family:'Liberation Sans',sans-serif;letter-spacing:-0.353px;-webkit-text-stroke:0.5px currentColor;">18:16:00</div>
<div class="t" style="left:1846.14px;top:205.26px;font-size:24.50px;line-height:24.50px;color:#ccccdc;font-family:'Liberation Sans',sans-serif;letter-spacing:-0.353px;-webkit-text-stroke:0.5px currentColor;">18:17:00</div>
<div class="t" style="left:2027.20px;top:205.26px;font-size:24.50px;line-height:24.50px;color:#ccccdc;font-family:'Liberation Sans',sans-serif;letter-spacing:-0.353px;-webkit-text-stroke:0.5px currentColor;">18:18:00</div>
<div class="t" style="left:2208.26px;top:205.26px;font-size:24.50px;line-height:24.50px;color:#ccccdc;font-family:'Liberation Sans',sans-serif;letter-spacing:-0.353px;-webkit-text-stroke:0.5px currentColor;">18:19:00</div>
<div class="t" style="left:2389.32px;top:205.26px;font-size:24.50px;line-height:24.50px;color:#ccccdc;font-family:'Liberation Sans',sans-serif;letter-spacing:-0.353px;-webkit-text-stroke:0.5px currentColor;">18:20:00</div>
<div class="t" style="left:2570.38px;top:205.26px;font-size:24.50px;line-height:24.50px;color:#ccccdc;font-family:'Liberation Sans',sans-serif;letter-spacing:-0.353px;-webkit-text-stroke:0.5px currentColor;">18:21:00</div>
<div class="t" style="left:2751.44px;top:205.26px;font-size:24.50px;line-height:24.50px;color:#ccccdc;font-family:'Liberation Sans',sans-serif;letter-spacing:-0.353px;-webkit-text-stroke:0.5px currentColor;">18:22:00</div>
<div style="position:absolute;left:2832.00px;top:180.00px;width:18.00px;height:60.00px;background:#1c1d21;"></div>
<div class="t" style="right:2787.00px;top:97.58px;font-size:23.30px;line-height:23.30px;color:#ccccdc;font-family:'Liberation Sans',sans-serif;-webkit-text-stroke:0.5px currentColor;">200</div>
<div class="t" style="right:2787.00px;top:138.58px;font-size:23.30px;line-height:23.30px;color:#ccccdc;font-family:'Liberation Sans',sans-serif;-webkit-text-stroke:0.5px currentColor;">100</div>
<div class="t" style="right:2787.00px;top:180.28px;font-size:23.30px;line-height:23.30px;color:#ccccdc;font-family:'Liberation Sans',sans-serif;-webkit-text-stroke:0.5px currentColor;">0</div>
<div style="position:absolute;left:52.00px;top:256.50px;width:26.00px;height:7.00px;background:#adafad;border-radius:4px;"></div>
<div class="t" style="left:91.30px;top:248.68px;font-size:23.30px;line-height:23.30px;color:#ccccdc;font-family:'Liberation Sans',sans-serif;letter-spacing:0.188px;-webkit-text-stroke:0.5px currentColor;">unknown</div>
<div class="t" style="left:200.50px;top:248.68px;font-size:23.30px;line-height:23.30px;color:#ccccdc;font-family:'Liberation Sans',sans-serif;letter-spacing:0.198px;-webkit-text-stroke:0.5px currentColor;">Total: 2.80 K</div>
<div style="position:absolute;left:29.00px;top:317.00px;width:417.00px;height:57.00px;box-sizing:border-box;background:#131418;border:1.5px solid rgba(204,204,220,0.12);"></div>
<div style="position:absolute;left:445.00px;top:317.00px;width:299.00px;height:57.00px;box-sizing:border-box;background:#131418;border:1.5px solid rgba(204,204,220,0.12);"></div>
<div class="t" style="left:44px;top:336.75px;font-size:22.5px;line-height:22.5px;font-family:'Liberation Mono',monospace;color:#9a9ba6;transform:scaleX(0.80);transform-origin:0 0;-webkit-text-stroke:0.25px currentColor;">Filter logs by string</div>
<div class="t" style="left:345.10px;top:333.44px;font-size:25.00px;line-height:25.00px;color:#9a9ba6;font-family:'Liberation Sans',sans-serif;-webkit-text-stroke:0.5px currentColor;">Aa</div>
<div class="t" style="left:399.60px;top:332.59px;font-size:26.00px;line-height:26.00px;color:#9a9ba6;font-family:'Liberation Sans',sans-serif;-webkit-text-stroke:0.5px currentColor;">.*</div>
<div class="t" style="left:473.60px;top:332.17px;font-size:26.50px;line-height:26.50px;color:#9a9ba6;font-family:'Liberation Sans',sans-serif;letter-spacing:0.841px;-webkit-text-stroke:0.55px currentColor;">Include</div>
<div class="t" style="left:617.60px;top:332.17px;font-size:26.50px;line-height:26.50px;color:#9a9ba6;font-family:'Liberation Sans',sans-serif;letter-spacing:0.537px;-webkit-text-stroke:0.55px currentColor;">Exclude</div>
<div style="position:absolute;left:2533.00px;top:317.00px;width:167.00px;height:57.00px;background:#232429;border-radius:9px;"></div>
<div class="t" style="left:2546.90px;top:332.65px;font-size:24.40px;line-height:24.40px;color:#ccccdc;font-family:'Liberation Sans',sans-serif;letter-spacing:-0.087px;-webkit-text-stroke:0.7px currentColor;">Line limit</div>
<svg style="position:absolute;left:2661.00px;top:335.00px;" width="23.00" height="23.00" viewBox="0 0 23 23" fill="none"><circle cx="11.5" cy="11.5" r="9.6" stroke="#9a9ba6" stroke-width="2"/><path d="M11.5 10.5 V16" stroke="#9a9ba6" stroke-width="2.4" stroke-linecap="round"/><circle cx="11.5" cy="7" r="1.4" fill="#9a9ba6"/></svg>
<div style="position:absolute;left:2707.00px;top:317.00px;width:144.00px;height:57.00px;box-sizing:border-box;background:#131418;border:1.5px solid rgba(204,204,220,0.20);border-radius:9px;"></div>
<div class="t" style="left:2721.60px;top:332.69px;font-size:26.00px;line-height:26.00px;color:#ccccdc;font-family:'Liberation Sans',sans-serif;letter-spacing:0.019px;-webkit-text-stroke:0.5px currentColor;">1000</div>
<svg style="position:absolute;left:2813.00px;top:339.00px;" width="18.00" height="13.00" viewBox="0 0 18 13" fill="none"><path d="M2.5 3 L9 9.5 L15.5 3" stroke="#9a9ba6" stroke-width="2.2" stroke-linecap="round" stroke-linejoin="round"/></svg>
<div style="position:absolute;left:29.00px;top:396.00px;width:2822.00px;height:1112.00px;box-sizing:border-box;background:#1c1d21;border:1.5px solid rgba(204,204,220,0.12);border-radius:9px;"></div>
<div class="t" style="left:50.60px;top:417.64px;font-size:28.30px;line-height:28.30px;color:#ccccdc;font-family:'Liberation Sans',sans-serif;letter-spacing:-0.623px;-webkit-text-stroke:0.95px currentColor;">Logs</div>
<div style="position:absolute;left:2511.00px;top:412.00px;width:264.00px;height:41.00px;box-sizing:border-box;border:1.5px solid rgba(204,204,220,0.20);border-radius:9px;"></div>
<div style="position:absolute;left:2595.00px;top:416.00px;width:86.00px;height:33.00px;background:#2b2d33;border-radius:7px;"></div>
<div class="t" style="left:2528.60px;top:420.05px;font-size:23.80px;line-height:23.80px;color:#9a9ba6;font-family:'Liberation Sans',sans-serif;letter-spacing:-0.237px;-webkit-text-stroke:0.5px currentColor;">Logs</div>
<div class="t" style="left:2608.30px;top:420.05px;font-size:23.80px;line-height:23.80px;color:#ccccdc;font-family:'Liberation Sans',sans-serif;letter-spacing:0.225px;-webkit-text-stroke:0.7px currentColor;">Table</div>
<div class="t" style="left:2694.40px;top:420.05px;font-size:23.80px;line-height:23.80px;color:#9a9ba6;font-family:'Liberation Sans',sans-serif;letter-spacing:-1.092px;-webkit-text-stroke:0.5px currentColor;">JSON</div>
<div style="position:absolute;left:2814.80px;top:423.20px;width:5.20px;height:5.20px;background:#ccccdc;border-radius:50%;"></div>
<div style="position:absolute;left:2814.80px;top:430.00px;width:5.20px;height:5.20px;background:#ccccdc;border-radius:50%;"></div>
<div style="position:absolute;left:2814.80px;top:436.90px;width:5.20px;height:5.20px;background:#ccccdc;border-radius:50%;"></div>
<div style="position:absolute;left:44.00px;top:483.00px;width:763.00px;height:56.00px;box-sizing:border-box;background:#131418;border:1.5px solid rgba(204,204,220,0.20);border-radius:9px;"></div>
<div class="t" style="left:59.00px;top:497.04px;font-size:27.60px;line-height:27.60px;color:#9a9ba6;font-family:'Liberation Sans',sans-serif;letter-spacing:-0.414px;-webkit-text-stroke:0.5px currentColor;">Search fields by name</div>
<svg style="position:absolute;left:815.00px;top:500.00px;" width="26.00" height="20.00" viewBox="0 0 26 20" fill="none"><path d="M23.5 2 V18" stroke="#ccccdc" stroke-width="2.2" stroke-linecap="round"/><path d="M19 10 H3 M8.5 4.5 L3 10 L8.5 15.5" stroke="#ccccdc" stroke-width="2.2" stroke-linecap="round" stroke-linejoin="round"/></svg>
<div style="position:absolute;left:51.00px;top:625.20px;width:29.00px;height:28.00px;background:#4a72d6;border-radius:6px;"></div>
<svg style="position:absolute;left:51.00px;top:625.20px;" width="29.00" height="28.00" viewBox="0 0 29 28" fill="none"><path d="M3.6 14.6 L10.5 21.5 L25 6.9" stroke="#ffffff" stroke-width="4.2" stroke-linecap="butt" stroke-linejoin="miter"/></svg>
<div class="t" style="left:93.60px;top:627.63px;font-size:23.00px;line-height:23.00px;color:#ccccdc;font-family:'Liberation Sans',sans-serif;letter-spacing:0.398px;-webkit-text-stroke:0.6px currentColor;">eventTime</div>
<div style="position:absolute;left:783.65px;top:627.05px;width:5.50px;height:5.50px;background:#6c6d75;border-radius:50%;"></div>
<div style="position:absolute;left:783.65px;top:636.55px;width:5.50px;height:5.50px;background:#6c6d75;border-radius:50%;"></div>
<div style="position:absolute;left:783.65px;top:646.05px;width:5.50px;height:5.50px;background:#6c6d75;border-radius:50%;"></div>
<div style="position:absolute;left:793.15px;top:627.05px;width:5.50px;height:5.50px;background:#6c6d75;border-radius:50%;"></div>
<div style="position:absolute;left:793.15px;top:636.55px;width:5.50px;height:5.50px;background:#6c6d75;border-radius:50%;"></div>
<div style="position:absolute;left:793.15px;top:646.05px;width:5.50px;height:5.50px;background:#6c6d75;border-radius:50%;"></div>
<div style="position:absolute;left:51.00px;top:671.98px;width:29.00px;height:28.00px;background:#4a72d6;border-radius:6px;"></div>
<svg style="position:absolute;left:51.00px;top:671.98px;" width="29.00" height="28.00" viewBox="0 0 29 28" fill="none"><path d="M3.6 14.6 L10.5 21.5 L25 6.9" stroke="#ffffff" stroke-width="4.2" stroke-linecap="butt" stroke-linejoin="miter"/></svg>
<div class="t" style="left:93.60px;top:674.41px;font-size:23.00px;line-height:23.00px;color:#ccccdc;font-family:'Liberation Sans',sans-serif;letter-spacing:0.433px;-webkit-text-stroke:0.6px currentColor;">eventName</div>
<div style="position:absolute;left:783.65px;top:673.83px;width:5.50px;height:5.50px;background:#6c6d75;border-radius:50%;"></div>
<div style="position:absolute;left:783.65px;top:683.33px;width:5.50px;height:5.50px;background:#6c6d75;border-radius:50%;"></div>
<div style="position:absolute;left:783.65px;top:692.83px;width:5.50px;height:5.50px;background:#6c6d75;border-radius:50%;"></div>
<div style="position:absolute;left:793.15px;top:673.83px;width:5.50px;height:5.50px;background:#6c6d75;border-radius:50%;"></div>
<div style="position:absolute;left:793.15px;top:683.33px;width:5.50px;height:5.50px;background:#6c6d75;border-radius:50%;"></div>
<div style="position:absolute;left:793.15px;top:692.83px;width:5.50px;height:5.50px;background:#6c6d75;border-radius:50%;"></div>
<div style="position:absolute;left:51.00px;top:718.76px;width:29.00px;height:28.00px;background:#4a72d6;border-radius:6px;"></div>
<svg style="position:absolute;left:51.00px;top:718.76px;" width="29.00" height="28.00" viewBox="0 0 29 28" fill="none"><path d="M3.6 14.6 L10.5 21.5 L25 6.9" stroke="#ffffff" stroke-width="4.2" stroke-linecap="butt" stroke-linejoin="miter"/></svg>
<div class="t" style="left:93.60px;top:721.19px;font-size:23.00px;line-height:23.00px;color:#ccccdc;font-family:'Liberation Sans',sans-serif;letter-spacing:0.375px;-webkit-text-stroke:0.6px currentColor;">eventSource</div>
<div style="position:absolute;left:783.65px;top:720.61px;width:5.50px;height:5.50px;background:#6c6d75;border-radius:50%;"></div>
<div style="position:absolute;left:783.65px;top:730.11px;width:5.50px;height:5.50px;background:#6c6d75;border-radius:50%;"></div>
<div style="position:absolute;left:783.65px;top:739.61px;width:5.50px;height:5.50px;background:#6c6d75;border-radius:50%;"></div>
<div style="position:absolute;left:793.15px;top:720.61px;width:5.50px;height:5.50px;background:#6c6d75;border-radius:50%;"></div>
<div style="position:absolute;left:793.15px;top:730.11px;width:5.50px;height:5.50px;background:#6c6d75;border-radius:50%;"></div>
<div style="position:absolute;left:793.15px;top:739.61px;width:5.50px;height:5.50px;background:#6c6d75;border-radius:50%;"></div>
<div style="position:absolute;left:51.00px;top:765.54px;width:29.00px;height:28.00px;background:#4a72d6;border-radius:6px;"></div>
<svg style="position:absolute;left:51.00px;top:765.54px;" width="29.00" height="28.00" viewBox="0 0 29 28" fill="none"><path d="M3.6 14.6 L10.5 21.5 L25 6.9" stroke="#ffffff" stroke-width="4.2" stroke-linecap="butt" stroke-linejoin="miter"/></svg>
<div class="t" style="left:93.60px;top:767.97px;font-size:23.00px;line-height:23.00px;color:#ccccdc;font-family:'Liberation Sans',sans-serif;letter-spacing:0.397px;-webkit-text-stroke:0.6px currentColor;">eventType</div>
<div style="position:absolute;left:783.65px;top:767.39px;width:5.50px;height:5.50px;background:#6c6d75;border-radius:50%;"></div>
<div style="position:absolute;left:783.65px;top:776.89px;width:5.50px;height:5.50px;background:#6c6d75;border-radius:50%;"></div>
<div style="position:absolute;left:783.65px;top:786.39px;width:5.50px;height:5.50px;background:#6c6d75;border-radius:50%;"></div>
<div style="position:absolute;left:793.15px;top:767.39px;width:5.50px;height:5.50px;background:#6c6d75;border-radius:50%;"></div>
<div style="position:absolute;left:793.15px;top:776.89px;width:5.50px;height:5.50px;background:#6c6d75;border-radius:50%;"></div>
<div style="position:absolute;left:793.15px;top:786.39px;width:5.50px;height:5.50px;background:#6c6d75;border-radius:50%;"></div>
<div style="position:absolute;left:51.00px;top:812.32px;width:29.00px;height:28.00px;background:#4a72d6;border-radius:6px;"></div>
<svg style="position:absolute;left:51.00px;top:812.32px;" width="29.00" height="28.00" viewBox="0 0 29 28" fill="none"><path d="M3.6 14.6 L10.5 21.5 L25 6.9" stroke="#ffffff" stroke-width="4.2" stroke-linecap="butt" stroke-linejoin="miter"/></svg>
<div class="t" style="left:93.60px;top:814.75px;font-size:23.00px;line-height:23.00px;color:#ccccdc;font-family:'Liberation Sans',sans-serif;letter-spacing:0.421px;-webkit-text-stroke:0.6px currentColor;">awsRegion</div>
<div style="position:absolute;left:783.65px;top:814.17px;width:5.50px;height:5.50px;background:#6c6d75;border-radius:50%;"></div>
<div style="position:absolute;left:783.65px;top:823.67px;width:5.50px;height:5.50px;background:#6c6d75;border-radius:50%;"></div>
<div style="position:absolute;left:783.65px;top:833.17px;width:5.50px;height:5.50px;background:#6c6d75;border-radius:50%;"></div>
<div style="position:absolute;left:793.15px;top:814.17px;width:5.50px;height:5.50px;background:#6c6d75;border-radius:50%;"></div>
<div style="position:absolute;left:793.15px;top:823.67px;width:5.50px;height:5.50px;background:#6c6d75;border-radius:50%;"></div>
<div style="position:absolute;left:793.15px;top:833.17px;width:5.50px;height:5.50px;background:#6c6d75;border-radius:50%;"></div>
<div style="position:absolute;left:51.00px;top:859.10px;width:29.00px;height:28.00px;background:#4a72d6;border-radius:6px;"></div>
<svg style="position:absolute;left:51.00px;top:859.10px;" width="29.00" height="28.00" viewBox="0 0 29 28" fill="none"><path d="M3.6 14.6 L10.5 21.5 L25 6.9" stroke="#ffffff" stroke-width="4.2" stroke-linecap="butt" stroke-linejoin="miter"/></svg>
<div class="t" style="left:93.60px;top:861.53px;font-size:23.00px;line-height:23.00px;color:#ccccdc;font-family:'Liberation Sans',sans-serif;letter-spacing:0.348px;-webkit-text-stroke:0.6px currentColor;">sourceIPAddress</div>
<div style="position:absolute;left:783.65px;top:860.95px;width:5.50px;height:5.50px;background:#6c6d75;border-radius:50%;"></div>
<div style="position:absolute;left:783.65px;top:870.45px;width:5.50px;height:5.50px;background:#6c6d75;border-radius:50%;"></div>
<div style="position:absolute;left:783.65px;top:879.95px;width:5.50px;height:5.50px;background:#6c6d75;border-radius:50%;"></div>
<div style="position:absolute;left:793.15px;top:860.95px;width:5.50px;height:5.50px;background:#6c6d75;border-radius:50%;"></div>
<div style="position:absolute;left:793.15px;top:870.45px;width:5.50px;height:5.50px;background:#6c6d75;border-radius:50%;"></div>
<div style="position:absolute;left:793.15px;top:879.95px;width:5.50px;height:5.50px;background:#6c6d75;border-radius:50%;"></div>
<div style="position:absolute;left:51.00px;top:905.88px;width:29.00px;height:28.00px;background:#4a72d6;border-radius:6px;"></div>
<svg style="position:absolute;left:51.00px;top:905.88px;" width="29.00" height="28.00" viewBox="0 0 29 28" fill="none"><path d="M3.6 14.6 L10.5 21.5 L25 6.9" stroke="#ffffff" stroke-width="4.2" stroke-linecap="butt" stroke-linejoin="miter"/></svg>
<div class="t" style="left:93.60px;top:908.31px;font-size:23.00px;line-height:23.00px;color:#ccccdc;font-family:'Liberation Sans',sans-serif;letter-spacing:0.389px;-webkit-text-stroke:0.6px currentColor;">errorCode</div>
<div style="position:absolute;left:783.65px;top:907.73px;width:5.50px;height:5.50px;background:#6c6d75;border-radius:50%;"></div>
<div style="position:absolute;left:783.65px;top:917.23px;width:5.50px;height:5.50px;background:#6c6d75;border-radius:50%;"></div>
<div style="position:absolute;left:783.65px;top:926.73px;width:5.50px;height:5.50px;background:#6c6d75;border-radius:50%;"></div>
<div style="position:absolute;left:793.15px;top:907.73px;width:5.50px;height:5.50px;background:#6c6d75;border-radius:50%;"></div>
<div style="position:absolute;left:793.15px;top:917.23px;width:5.50px;height:5.50px;background:#6c6d75;border-radius:50%;"></div>
<div style="position:absolute;left:793.15px;top:926.73px;width:5.50px;height:5.50px;background:#6c6d75;border-radius:50%;"></div>
<div style="position:absolute;left:51.00px;top:952.66px;width:29.00px;height:28.00px;background:#4a72d6;border-radius:6px;"></div>
<svg style="position:absolute;left:51.00px;top:952.66px;" width="29.00" height="28.00" viewBox="0 0 29 28" fill="none"><path d="M3.6 14.6 L10.5 21.5 L25 6.9" stroke="#ffffff" stroke-width="4.2" stroke-linecap="butt" stroke-linejoin="miter"/></svg>
<div class="t" style="left:93.60px;top:955.09px;font-size:23.00px;line-height:23.00px;color:#ccccdc;font-family:'Liberation Sans',sans-serif;letter-spacing:0.371px;-webkit-text-stroke:0.6px currentColor;">errorMessage</div>
<div style="position:absolute;left:783.65px;top:954.51px;width:5.50px;height:5.50px;background:#6c6d75;border-radius:50%;"></div>
<div style="position:absolute;left:783.65px;top:964.01px;width:5.50px;height:5.50px;background:#6c6d75;border-radius:50%;"></div>
<div style="position:absolute;left:783.65px;top:973.51px;width:5.50px;height:5.50px;background:#6c6d75;border-radius:50%;"></div>
<div style="position:absolute;left:793.15px;top:954.51px;width:5.50px;height:5.50px;background:#6c6d75;border-radius:50%;"></div>
<div style="position:absolute;left:793.15px;top:964.01px;width:5.50px;height:5.50px;background:#6c6d75;border-radius:50%;"></div>
<div style="position:absolute;left:793.15px;top:973.51px;width:5.50px;height:5.50px;background:#6c6d75;border-radius:50%;"></div>
<div style="position:absolute;left:51.00px;top:999.44px;width:29.00px;height:28.00px;background:#4a72d6;border-radius:6px;"></div>
<svg style="position:absolute;left:51.00px;top:999.44px;" width="29.00" height="28.00" viewBox="0 0 29 28" fill="none"><path d="M3.6 14.6 L10.5 21.5 L25 6.9" stroke="#ffffff" stroke-width="4.2" stroke-linecap="butt" stroke-linejoin="miter"/></svg>
<div class="t" style="left:93.60px;top:1001.87px;font-size:23.00px;line-height:23.00px;color:#ccccdc;font-family:'Liberation Sans',sans-serif;letter-spacing:0.302px;-webkit-text-stroke:0.6px currentColor;">userIdentity_accountId</div>
<div style="position:absolute;left:783.65px;top:1001.29px;width:5.50px;height:5.50px;background:#6c6d75;border-radius:50%;"></div>
<div style="position:absolute;left:783.65px;top:1010.79px;width:5.50px;height:5.50px;background:#6c6d75;border-radius:50%;"></div>
<div style="position:absolute;left:783.65px;top:1020.29px;width:5.50px;height:5.50px;background:#6c6d75;border-radius:50%;"></div>
<div style="position:absolute;left:793.15px;top:1001.29px;width:5.50px;height:5.50px;background:#6c6d75;border-radius:50%;"></div>
<div style="position:absolute;left:793.15px;top:1010.79px;width:5.50px;height:5.50px;background:#6c6d75;border-radius:50%;"></div>
<div style="position:absolute;left:793.15px;top:1020.29px;width:5.50px;height:5.50px;background:#6c6d75;border-radius:50%;"></div>
<div style="position:absolute;left:51.00px;top:1046.22px;width:29.00px;height:28.00px;background:#4a72d6;border-radius:6px;"></div>
<svg style="position:absolute;left:51.00px;top:1046.22px;" width="29.00" height="28.00" viewBox="0 0 29 28" fill="none"><path d="M3.6 14.6 L10.5 21.5 L25 6.9" stroke="#ffffff" stroke-width="4.2" stroke-linecap="butt" stroke-linejoin="miter"/></svg>
<div class="t" style="left:93.60px;top:1048.65px;font-size:23.00px;line-height:23.00px;color:#ccccdc;font-family:'Liberation Sans',sans-serif;letter-spacing:0.299px;-webkit-text-stroke:0.6px currentColor;">userIdentity_sessionContext_sessionIssuer_userName</div>
<div style="position:absolute;left:783.65px;top:1048.07px;width:5.50px;height:5.50px;background:#6c6d75;border-radius:50%;"></div>
<div style="position:absolute;left:783.65px;top:1057.57px;width:5.50px;height:5.50px;background:#6c6d75;border-radius:50%;"></div>
<div style="position:absolute;left:783.65px;top:1067.07px;width:5.50px;height:5.50px;background:#6c6d75;border-radius:50%;"></div>
<div style="position:absolute;left:793.15px;top:1048.07px;width:5.50px;height:5.50px;background:#6c6d75;border-radius:50%;"></div>
<div style="position:absolute;left:793.15px;top:1057.57px;width:5.50px;height:5.50px;background:#6c6d75;border-radius:50%;"></div>
<div style="position:absolute;left:793.15px;top:1067.07px;width:5.50px;height:5.50px;background:#6c6d75;border-radius:50%;"></div>
<div style="position:absolute;left:51.00px;top:1093.00px;width:29.00px;height:28.00px;background:#4a72d6;border-radius:6px;"></div>
<svg style="position:absolute;left:51.00px;top:1093.00px;" width="29.00" height="28.00" viewBox="0 0 29 28" fill="none"><path d="M3.6 14.6 L10.5 21.5 L25 6.9" stroke="#ffffff" stroke-width="4.2" stroke-linecap="butt" stroke-linejoin="miter"/></svg>
<div class="t" style="left:93.60px;top:1095.43px;font-size:23.00px;line-height:23.00px;color:#ccccdc;font-family:'Liberation Sans',sans-serif;letter-spacing:0.407px;-webkit-text-stroke:0.6px currentColor;">readOnly</div>
<div style="position:absolute;left:783.65px;top:1094.85px;width:5.50px;height:5.50px;background:#6c6d75;border-radius:50%;"></div>
<div style="position:absolute;left:783.65px;top:1104.35px;width:5.50px;height:5.50px;background:#6c6d75;border-radius:50%;"></div>
<div style="position:absolute;left:783.65px;top:1113.85px;width:5.50px;height:5.50px;background:#6c6d75;border-radius:50%;"></div>
<div style="position:absolute;left:793.15px;top:1094.85px;width:5.50px;height:5.50px;background:#6c6d75;border-radius:50%;"></div>
<div style="position:absolute;left:793.15px;top:1104.35px;width:5.50px;height:5.50px;background:#6c6d75;border-radius:50%;"></div>
<div style="position:absolute;left:793.15px;top:1113.85px;width:5.50px;height:5.50px;background:#6c6d75;border-radius:50%;"></div>
<div style="position:absolute;left:44.00px;top:569.00px;width:763.00px;height:61.00px;background:#232429;"></div>
<div class="t" style="left:64.90px;top:585.48px;font-size:27.20px;line-height:27.20px;color:#ccccdc;font-family:'Liberation Sans',sans-serif;letter-spacing:0.235px;-webkit-text-stroke:0.65px currentColor;">Selected fields</div>
<div class="t" style="right:2095.00px;top:588.70px;font-size:21.50px;line-height:21.50px;color:#ccccdc;font-family:'Liberation Sans',sans-serif;-webkit-text-stroke:0.6px currentColor;">Reset</div>
<div style="position:absolute;left:822.00px;top:738.00px;width:14.00px;height:511.00px;background:#2c2e33;border-radius:7px;"></div>
<div style="position:absolute;left:44.00px;top:1144.70px;width:763.00px;height:61.00px;background:#232429;"></div>
<div class="t" style="left:64.60px;top:1160.88px;font-size:27.20px;line-height:27.20px;color:#ccccdc;font-family:'Liberation Sans',sans-serif;letter-spacing:-0.012px;-webkit-text-stroke:0.65px currentColor;">Fields</div>
<div style="position:absolute;left:51.00px;top:1251.60px;width:29.00px;height:28.00px;box-sizing:border-box;background:#131418;border:1.5px solid rgba(204,204,220,0.20);border-radius:6px;"></div>
<div class="t" style="left:93.60px;top:1254.73px;font-size:23.00px;line-height:23.00px;color:#ccccdc;font-family:'Liberation Sans',sans-serif;letter-spacing:0.880px;-webkit-text-stroke:0.6px currentColor;">Time</div>
<div class="t" style="right:2082.00px;top:1239.82px;font-size:21.00px;line-height:21.00px;color:#9a9ba6;font-family:'Liberation Sans',sans-serif;-webkit-text-stroke:0.5px currentColor;">100%</div>
<div class="t" style="right:2082.00px;top:1270.22px;font-size:21.60px;line-height:21.60px;color:#9a9ba6;font-family:'Liberation Sans',sans-serif;letter-spacing:-0.109px;-webkit-text-stroke:0.5px currentColor;">1000 values</div>
<div style="position:absolute;left:51.00px;top:1297.80px;width:756.00px;height:1.30px;background:rgba(204,204,220,0.12);"></div>
<div style="position:absolute;left:51.00px;top:1318.30px;width:29.00px;height:28.00px;box-sizing:border-box;background:#131418;border:1.5px solid rgba(204,204,220,0.20);border-radius:6px;"></div>
<div class="t" style="left:93.60px;top:1321.43px;font-size:23.00px;line-height:23.00px;color:#ccccdc;font-family:'Liberation Sans',sans-serif;letter-spacing:0.505px;-webkit-text-stroke:0.6px currentColor;">Line</div>
<div class="t" style="right:2082.00px;top:1306.52px;font-size:21.00px;line-height:21.00px;color:#9a9ba6;font-family:'Liberation Sans',sans-serif;-webkit-text-stroke:0.5px currentColor;">100%</div>
<div class="t" style="right:2082.00px;top:1336.92px;font-size:21.60px;line-height:21.60px;color:#9a9ba6;font-family:'Liberation Sans',sans-serif;letter-spacing:-0.109px;-webkit-text-stroke:0.5px currentColor;">1000 values</div>
<div style="position:absolute;left:51.00px;top:1364.50px;width:756.00px;height:1.30px;background:rgba(204,204,220,0.12);"></div>
<div style="position:absolute;left:51.00px;top:1385.00px;width:29.00px;height:28.00px;box-sizing:border-box;background:#131418;border:1.5px solid rgba(204,204,220,0.20);border-radius:6px;"></div>
<div class="t" style="left:93.60px;top:1388.13px;font-size:23.00px;line-height:23.00px;color:#ccccdc;font-family:'Liberation Sans',sans-serif;letter-spacing:-0.103px;-webkit-text-stroke:0.6px currentColor;">__aws_log_type</div>
<div class="t" style="right:2082.00px;top:1373.22px;font-size:21.00px;line-height:21.00px;color:#9a9ba6;font-family:'Liberation Sans',sans-serif;-webkit-text-stroke:0.5px currentColor;">100%</div>
<div class="t" style="right:2082.00px;top:1403.62px;font-size:21.60px;line-height:21.60px;color:#9a9ba6;font-family:'Liberation Sans',sans-serif;letter-spacing:-0.559px;-webkit-text-stroke:0.5px currentColor;">1 value</div>
<div style="position:absolute;left:51.00px;top:1431.20px;width:756.00px;height:1.30px;background:rgba(204,204,220,0.12);"></div>
<div style="position:absolute;left:51.00px;top:1451.70px;width:29.00px;height:28.00px;box-sizing:border-box;background:#131418;border:1.5px solid rgba(204,204,220,0.20);border-radius:6px;"></div>
<div class="t" style="left:93.60px;top:1454.83px;font-size:23.00px;line-height:23.00px;color:#ccccdc;font-family:'Liberation Sans',sans-serif;letter-spacing:0.033px;-webkit-text-stroke:0.6px currentColor;">__aws_s3_cloudtrail</div>
<div class="t" style="right:2082.00px;top:1439.92px;font-size:21.00px;line-height:21.00px;color:#9a9ba6;font-family:'Liberation Sans',sans-serif;-webkit-text-stroke:0.5px currentColor;">100%</div>
<div class="t" style="right:2082.00px;top:1470.32px;font-size:21.60px;line-height:21.60px;color:#9a9ba6;font-family:'Liberation Sans',sans-serif;letter-spacing:-0.458px;-webkit-text-stroke:0.5px currentColor;">31 values</div>
<div style="position:absolute;left:51.00px;top:1497.90px;width:756.00px;height:1.30px;background:rgba(204,204,220,0.12);"></div>
<div style="position:absolute;left:851px;top:533.5px;width:1654px;height:893.0px;overflow:hidden;">
<div style="position:absolute;left:0.00px;top:1.00px;width:101.00px;height:892.00px;background:#232429;"></div>
<div style="position:absolute;left:101.00px;top:1.00px;width:10.00px;height:892.00px;background:linear-gradient(to right, rgba(0,0,0,0.28), rgba(0,0,0,0));"></div>
<div style="position:absolute;left:0.00px;top:64.16px;width:1654.00px;height:1.30px;background:rgba(204,204,220,0.12);"></div>
<svg style="position:absolute;left:14.00px;top:19.38px;" width="27.00" height="22.00" viewBox="0 0 27 22" fill="none"><path d="M2.2 11 C5 5 9 2.6 13.5 2.6 C18 2.6 22 5 24.8 11 C22 17 18 19.4 13.5 19.4 C9 19.4 5 17 2.2 11 Z" stroke="#ccccdc" stroke-width="2.4" stroke-linejoin="round"/><circle cx="13.5" cy="11" r="3.7" stroke="#ccccdc" stroke-width="2.4"/></svg>
<svg style="position:absolute;left:54.00px;top:19.38px;" width="27.00" height="26.00" viewBox="0 0 27 26" fill="none"><circle cx="20.6" cy="5.8" r="3.7" stroke="#ccccdc" stroke-width="2.3"/><circle cx="6.1" cy="12.8" r="3.7" stroke="#ccccdc" stroke-width="2.3"/><circle cx="20.6" cy="20.2" r="3.7" stroke="#ccccdc" stroke-width="2.3"/><path d="M9.4 11.2 L17.3 7.4 M9.4 14.5 L17.3 18.5" stroke="#ccccdc" stroke-width="2.3"/></svg>
<div style="position:absolute;left:110.30px;top:7.30px;width:300.37px;height:49.40px;box-sizing:border-box;border:1.3px solid rgba(204,204,220,0.12);"></div>
<div class="t" style="left:113.90px;top:17.14px;font-size:27.60px;line-height:27.60px;color:#ccccdc;font-family:'Liberation Sans',sans-serif;letter-spacing:0.106px;-webkit-text-stroke:0.5px currentColor;">2025-12-29T09:20:47Z</div>
<div style="position:absolute;left:459.00px;top:7.30px;width:191.50px;height:49.40px;box-sizing:border-box;border:1.3px solid rgba(204,204,220,0.12);"></div>
<div class="t" style="left:462.60px;top:17.14px;font-size:27.60px;line-height:27.60px;color:#ccccdc;font-family:'Liberation Sans',sans-serif;letter-spacing:-0.189px;-webkit-text-stroke:0.5px currentColor;">ListExecutions</div>
<div style="position:absolute;left:766.70px;top:7.30px;width:300.70px;height:49.40px;box-sizing:border-box;border:1.3px solid rgba(204,204,220,0.12);"></div>
<div class="t" style="left:770.30px;top:17.14px;font-size:27.60px;line-height:27.60px;color:#ccccdc;font-family:'Liberation Sans',sans-serif;letter-spacing:-0.194px;-webkit-text-stroke:0.5px currentColor;">states.amazonaws.com</div>
<div style="position:absolute;left:1132.00px;top:7.30px;width:152.50px;height:49.40px;box-sizing:border-box;border:1.3px solid rgba(204,204,220,0.12);"></div>
<div class="t" style="left:1135.60px;top:17.14px;font-size:27.60px;line-height:27.60px;color:#ccccdc;font-family:'Liberation Sans',sans-serif;letter-spacing:-0.287px;-webkit-text-stroke:0.5px currentColor;">AwsApiCall</div>
<div style="position:absolute;left:1397.00px;top:7.30px;width:139.60px;height:49.40px;box-sizing:border-box;border:1.3px solid rgba(204,204,220,0.12);"></div>
<div class="t" style="left:1400.60px;top:17.14px;font-size:27.60px;line-height:27.60px;color:#ccccdc;font-family:'Liberation Sans',sans-serif;letter-spacing:0.496px;-webkit-text-stroke:0.5px currentColor;">us-west-2</div>
<div style="position:absolute;left:1643.20px;top:7.30px;width:43.35px;height:49.40px;box-sizing:border-box;border:1.3px solid rgba(204,204,220,0.12);"></div>
<div class="t" style="left:1646.80px;top:17.14px;font-size:27.60px;line-height:27.60px;color:#ccccdc;font-family:'Liberation Sans',sans-serif;-webkit-text-stroke:0.5px currentColor;">3</div>
<div style="position:absolute;left:0.00px;top:128.92px;width:1654.00px;height:1.30px;background:rgba(204,204,220,0.12);"></div>
<svg style="position:absolute;left:14.00px;top:84.14px;" width="27.00" height="22.00" viewBox="0 0 27 22" fill="none"><path d="M2.2 11 C5 5 9 2.6 13.5 2.6 C18 2.6 22 5 24.8 11 C22 17 18 19.4 13.5 19.4 C9 19.4 5 17 2.2 11 Z" stroke="#ccccdc" stroke-width="2.4" stroke-linejoin="round"/><circle cx="13.5" cy="11" r="3.7" stroke="#ccccdc" stroke-width="2.4"/></svg>
<svg style="position:absolute;left:54.00px;top:84.14px;" width="27.00" height="26.00" viewBox="0 0 27 26" fill="none"><circle cx="20.6" cy="5.8" r="3.7" stroke="#ccccdc" stroke-width="2.3"/><circle cx="6.1" cy="12.8" r="3.7" stroke="#ccccdc" stroke-width="2.3"/><circle cx="20.6" cy="20.2" r="3.7" stroke="#ccccdc" stroke-width="2.3"/><path d="M9.4 11.2 L17.3 7.4 M9.4 14.5 L17.3 18.5" stroke="#ccccdc" stroke-width="2.3"/></svg>
<div style="position:absolute;left:110.30px;top:72.06px;width:300.37px;height:49.40px;box-sizing:border-box;border:1.3px solid rgba(204,204,220,0.12);"></div>
<div class="t" style="left:113.90px;top:81.90px;font-size:27.60px;line-height:27.60px;color:#ccccdc;font-family:'Liberation Sans',sans-serif;letter-spacing:0.106px;-webkit-text-stroke:0.5px currentColor;">2025-12-29T09:20:40Z</div>
<div style="position:absolute;left:459.00px;top:72.06px;width:191.50px;height:49.40px;box-sizing:border-box;border:1.3px solid rgba(204,204,220,0.12);"></div>
<div class="t" style="left:462.60px;top:81.90px;font-size:27.60px;line-height:27.60px;color:#ccccdc;font-family:'Liberation Sans',sans-serif;letter-spacing:-0.189px;-webkit-text-stroke:0.5px currentColor;">ListExecutions</div>
<div style="position:absolute;left:766.70px;top:72.06px;width:300.70px;height:49.40px;box-sizing:border-box;border:1.3px solid rgba(204,204,220,0.12);"></div>
<div class="t" style="left:770.30px;top:81.90px;font-size:27.60px;line-height:27.60px;color:#ccccdc;font-family:'Liberation Sans',sans-serif;letter-spacing:-0.194px;-webkit-text-stroke:0.5px currentColor;">states.amazonaws.com</div>
<div style="position:absolute;left:1132.00px;top:72.06px;width:152.50px;height:49.40px;box-sizing:border-box;border:1.3px solid rgba(204,204,220,0.12);"></div>
<div class="t" style="left:1135.60px;top:81.90px;font-size:27.60px;line-height:27.60px;color:#ccccdc;font-family:'Liberation Sans',sans-serif;letter-spacing:-0.287px;-webkit-text-stroke:0.5px currentColor;">AwsApiCall</div>
<div style="position:absolute;left:1397.00px;top:72.06px;width:139.60px;height:49.40px;box-sizing:border-box;border:1.3px solid rgba(204,204,220,0.12);"></div>
<div class="t" style="left:1400.60px;top:81.90px;font-size:27.60px;line-height:27.60px;color:#ccccdc;font-family:'Liberation Sans',sans-serif;letter-spacing:0.496px;-webkit-text-stroke:0.5px currentColor;">us-west-2</div>
<div style="position:absolute;left:1643.20px;top:72.06px;width:43.35px;height:49.40px;box-sizing:border-box;border:1.3px solid rgba(204,204,220,0.12);"></div>
<div class="t" style="left:1646.80px;top:81.90px;font-size:27.60px;line-height:27.60px;color:#ccccdc;font-family:'Liberation Sans',sans-serif;-webkit-text-stroke:0.5px currentColor;">3</div>
<div style="position:absolute;left:0.00px;top:193.68px;width:1654.00px;height:1.30px;background:rgba(204,204,220,0.12);"></div>
<svg style="position:absolute;left:14.00px;top:148.90px;" width="27.00" height="22.00" viewBox="0 0 27 22" fill="none"><path d="M2.2 11 C5 5 9 2.6 13.5 2.6 C18 2.6 22 5 24.8 11 C22 17 18 19.4 13.5 19.4 C9 19.4 5 17 2.2 11 Z" stroke="#ccccdc" stroke-width="2.4" stroke-linejoin="round"/><circle cx="13.5" cy="11" r="3.7" stroke="#ccccdc" stroke-width="2.4"/></svg>
<svg style="position:absolute;left:54.00px;top:148.90px;" width="27.00" height="26.00" viewBox="0 0 27 26" fill="none"><circle cx="20.6" cy="5.8" r="3.7" stroke="#ccccdc" stroke-width="2.3"/><circle cx="6.1" cy="12.8" r="3.7" stroke="#ccccdc" stroke-width="2.3"/><circle cx="20.6" cy="20.2" r="3.7" stroke="#ccccdc" stroke-width="2.3"/><path d="M9.4 11.2 L17.3 7.4 M9.4 14.5 L17.3 18.5" stroke="#ccccdc" stroke-width="2.3"/></svg>
<div style="position:absolute;left:110.30px;top:136.82px;width:300.37px;height:49.40px;box-sizing:border-box;border:1.3px solid rgba(204,204,220,0.12);"></div>
<div class="t" style="left:113.90px;top:146.66px;font-size:27.60px;line-height:27.60px;color:#ccccdc;font-family:'Liberation Sans',sans-serif;letter-spacing:0.106px;-webkit-text-stroke:0.5px currentColor;">2025-12-29T09:20:36Z</div>
<div style="position:absolute;left:459.00px;top:136.82px;width:191.50px;height:49.40px;box-sizing:border-box;border:1.3px solid rgba(204,204,220,0.12);"></div>
<div class="t" style="left:462.60px;top:146.66px;font-size:27.60px;line-height:27.60px;color:#ccccdc;font-family:'Liberation Sans',sans-serif;letter-spacing:-0.189px;-webkit-text-stroke:0.5px currentColor;">ListExecutions</div>
<div style="position:absolute;left:766.70px;top:136.82px;width:300.70px;height:49.40px;box-sizing:border-box;border:1.3px solid rgba(204,204,220,0.12);"></div>
<div class="t" style="left:770.30px;top:146.66px;font-size:27.60px;line-height:27.60px;color:#ccccdc;font-family:'Liberation Sans',sans-serif;letter-spacing:-0.194px;-webkit-text-stroke:0.5px currentColor;">states.amazonaws.com</div>
<div style="position:absolute;left:1132.00px;top:136.82px;width:152.50px;height:49.40px;box-sizing:border-box;border:1.3px solid rgba(204,204,220,0.12);"></div>
<div class="t" style="left:1135.60px;top:146.66px;font-size:27.60px;line-height:27.60px;color:#ccccdc;font-family:'Liberation Sans',sans-serif;letter-spacing:-0.287px;-webkit-text-stroke:0.5px currentColor;">AwsApiCall</div>
<div style="position:absolute;left:1397.00px;top:136.82px;width:139.60px;height:49.40px;box-sizing:border-box;border:1.3px solid rgba(204,204,220,0.12);"></div>
<div class="t" style="left:1400.60px;top:146.66px;font-size:27.60px;line-height:27.60px;color:#ccccdc;font-family:'Liberation Sans',sans-serif;letter-spacing:0.496px;-webkit-text-stroke:0.5px currentColor;">us-west-2</div>
<div style="position:absolute;left:1643.20px;top:136.82px;width:43.35px;height:49.40px;box-sizing:border-box;border:1.3px solid rgba(204,204,220,0.12);"></div>
<div class="t" style="left:1646.80px;top:146.66px;font-size:27.60px;line-height:27.60px;color:#ccccdc;font-family:'Liberation Sans',sans-serif;-webkit-text-stroke:0.5px currentColor;">3</div>
<div style="position:absolute;left:0.00px;top:258.44px;width:1654.00px;height:1.30px;background:rgba(204,204,220,0.12);"></div>
<svg style="position:absolute;left:14.00px;top:213.66px;" width="27.00" height="22.00" viewBox="0 0 27 22" fill="none"><path d="M2.2 11 C5 5 9 2.6 13.5 2.6 C18 2.6 22 5 24.8 11 C22 17 18 19.4 13.5 19.4 C9 19.4 5 17 2.2 11 Z" stroke="#ccccdc" stroke-width="2.4" stroke-linejoin="round"/><circle cx="13.5" cy="11" r="3.7" stroke="#ccccdc" stroke-width="2.4"/></svg>
<svg style="position:absolute;left:54.00px;top:213.66px;" width="27.00" height="26.00" viewBox="0 0 27 26" fill="none"><circle cx="20.6" cy="5.8" r="3.7" stroke="#ccccdc" stroke-width="2.3"/><circle cx="6.1" cy="12.8" r="3.7" stroke="#ccccdc" stroke-width="2.3"/><circle cx="20.6" cy="20.2" r="3.7" stroke="#ccccdc" stroke-width="2.3"/><path d="M9.4 11.2 L17.3 7.4 M9.4 14.5 L17.3 18.5" stroke="#ccccdc" stroke-width="2.3"/></svg>
<div style="position:absolute;left:110.30px;top:201.58px;width:300.37px;height:49.40px;box-sizing:border-box;border:1.3px solid rgba(204,204,220,0.12);"></div>
<div class="t" style="left:113.90px;top:211.42px;font-size:27.60px;line-height:27.60px;color:#ccccdc;font-family:'Liberation Sans',sans-serif;letter-spacing:0.106px;-webkit-text-stroke:0.5px currentColor;">2025-12-29T09:20:30Z</div>
<div style="position:absolute;left:459.00px;top:201.58px;width:191.50px;height:49.40px;box-sizing:border-box;border:1.3px solid rgba(204,204,220,0.12);"></div>
<div class="t" style="left:462.60px;top:211.42px;font-size:27.60px;line-height:27.60px;color:#ccccdc;font-family:'Liberation Sans',sans-serif;letter-spacing:-0.189px;-webkit-text-stroke:0.5px currentColor;">ListExecutions</div>
<div style="position:absolute;left:766.70px;top:201.58px;width:300.70px;height:49.40px;box-sizing:border-box;border:1.3px solid rgba(204,204,220,0.12);"></div>
<div class="t" style="left:770.30px;top:211.42px;font-size:27.60px;line-height:27.60px;color:#ccccdc;font-family:'Liberation Sans',sans-serif;letter-spacing:-0.194px;-webkit-text-stroke:0.5px currentColor;">states.amazonaws.com</div>
<div style="position:absolute;left:1132.00px;top:201.58px;width:152.50px;height:49.40px;box-sizing:border-box;border:1.3px solid rgba(204,204,220,0.12);"></div>
<div class="t" style="left:1135.60px;top:211.42px;font-size:27.60px;line-height:27.60px;color:#ccccdc;font-family:'Liberation Sans',sans-serif;letter-spacing:-0.287px;-webkit-text-stroke:0.5px currentColor;">AwsApiCall</div>
<div style="position:absolute;left:1397.00px;top:201.58px;width:139.60px;height:49.40px;box-sizing:border-box;border:1.3px solid rgba(204,204,220,0.12);"></div>
<div class="t" style="left:1400.60px;top:211.42px;font-size:27.60px;line-height:27.60px;color:#ccccdc;font-family:'Liberation Sans',sans-serif;letter-spacing:0.496px;-webkit-text-stroke:0.5px currentColor;">us-west-2</div>
<div style="position:absolute;left:1643.20px;top:201.58px;width:43.35px;height:49.40px;box-sizing:border-box;border:1.3px solid rgba(204,204,220,0.12);"></div>
<div class="t" style="left:1646.80px;top:211.42px;font-size:27.60px;line-height:27.60px;color:#ccccdc;font-family:'Liberation Sans',sans-serif;-webkit-text-stroke:0.5px currentColor;">3</div>
<div style="position:absolute;left:0.00px;top:323.20px;width:1654.00px;height:1.30px;background:rgba(204,204,220,0.12);"></div>
<svg style="position:absolute;left:14.00px;top:278.42px;" width="27.00" height="22.00" viewBox="0 0 27 22" fill="none"><path d="M2.2 11 C5 5 9 2.6 13.5 2.6 C18 2.6 22 5 24.8 11 C22 17 18 19.4 13.5 19.4 C9 19.4 5 17 2.2 11 Z" stroke="#ccccdc" stroke-width="2.4" stroke-linejoin="round"/><circle cx="13.5" cy="11" r="3.7" stroke="#ccccdc" stroke-width="2.4"/></svg>
<svg style="position:absolute;left:54.00px;top:278.42px;" width="27.00" height="26.00" viewBox="0 0 27 26" fill="none"><circle cx="20.6" cy="5.8" r="3.7" stroke="#ccccdc" stroke-width="2.3"/><circle cx="6.1" cy="12.8" r="3.7" stroke="#ccccdc" stroke-width="2.3"/><circle cx="20.6" cy="20.2" r="3.7" stroke="#ccccdc" stroke-width="2.3"/><path d="M9.4 11.2 L17.3 7.4 M9.4 14.5 L17.3 18.5" stroke="#ccccdc" stroke-width="2.3"/></svg>
<div style="position:absolute;left:110.30px;top:266.34px;width:300.37px;height:49.40px;box-sizing:border-box;border:1.3px solid rgba(204,204,220,0.12);"></div>
<div class="t" style="left:113.90px;top:276.18px;font-size:27.60px;line-height:27.60px;color:#ccccdc;font-family:'Liberation Sans',sans-serif;letter-spacing:0.106px;-webkit-text-stroke:0.5px currentColor;">2025-12-29T09:20:30Z</div>
<div style="position:absolute;left:459.00px;top:266.34px;width:191.50px;height:49.40px;box-sizing:border-box;border:1.3px solid rgba(204,204,220,0.12);"></div>
<div class="t" style="left:462.60px;top:276.18px;font-size:27.60px;line-height:27.60px;color:#ccccdc;font-family:'Liberation Sans',sans-serif;letter-spacing:-0.189px;-webkit-text-stroke:0.5px currentColor;">ListExecutions</div>
<div style="position:absolute;left:766.70px;top:266.34px;width:300.70px;height:49.40px;box-sizing:border-box;border:1.3px solid rgba(204,204,220,0.12);"></div>
<div class="t" style="left:770.30px;top:276.18px;font-size:27.60px;line-height:27.60px;color:#ccccdc;font-family:'Liberation Sans',sans-serif;letter-spacing:-0.194px;-webkit-text-stroke:0.5px currentColor;">states.amazonaws.com</div>
<div style="position:absolute;left:1132.00px;top:266.34px;width:152.50px;height:49.40px;box-sizing:border-box;border:1.3px solid rgba(204,204,220,0.12);"></div>
<div class="t" style="left:1135.60px;top:276.18px;font-size:27.60px;line-height:27.60px;color:#ccccdc;font-family:'Liberation Sans',sans-serif;letter-spacing:-0.287px;-webkit-text-stroke:0.5px currentColor;">AwsApiCall</div>
<div style="position:absolute;left:1397.00px;top:266.34px;width:139.60px;height:49.40px;box-sizing:border-box;border:1.3px solid rgba(204,204,220,0.12);"></div>
<div class="t" style="left:1400.60px;top:276.18px;font-size:27.60px;line-height:27.60px;color:#ccccdc;font-family:'Liberation Sans',sans-serif;letter-spacing:0.496px;-webkit-text-stroke:0.5px currentColor;">us-west-2</div>
<div style="position:absolute;left:1643.20px;top:266.34px;width:43.35px;height:49.40px;box-sizing:border-box;border:1.3px solid rgba(204,204,220,0.12);"></div>
<div class="t" style="left:1646.80px;top:276.18px;font-size:27.60px;line-height:27.60px;color:#ccccdc;font-family:'Liberation Sans',sans-serif;-webkit-text-stroke:0.5px currentColor;">3</div>
<div style="position:absolute;left:0.00px;top:387.96px;width:1654.00px;height:1.30px;background:rgba(204,204,220,0.12);"></div>
<svg style="position:absolute;left:14.00px;top:343.18px;" width="27.00" height="22.00" viewBox="0 0 27 22" fill="none"><path d="M2.2 11 C5 5 9 2.6 13.5 2.6 C18 2.6 22 5 24.8 11 C22 17 18 19.4 13.5 19.4 C9 19.4 5 17 2.2 11 Z" stroke="#ccccdc" stroke-width="2.4" stroke-linejoin="round"/><circle cx="13.5" cy="11" r="3.7" stroke="#ccccdc" stroke-width="2.4"/></svg>
<svg style="position:absolute;left:54.00px;top:343.18px;" width="27.00" height="26.00" viewBox="0 0 27 26" fill="none"><circle cx="20.6" cy="5.8" r="3.7" stroke="#ccccdc" stroke-width="2.3"/><circle cx="6.1" cy="12.8" r="3.7" stroke="#ccccdc" stroke-width="2.3"/><circle cx="20.6" cy="20.2" r="3.7" stroke="#ccccdc" stroke-width="2.3"/><path d="M9.4 11.2 L17.3 7.4 M9.4 14.5 L17.3 18.5" stroke="#ccccdc" stroke-width="2.3"/></svg>
<div style="position:absolute;left:110.30px;top:331.10px;width:300.37px;height:49.40px;box-sizing:border-box;border:1.3px solid rgba(204,204,220,0.12);"></div>
<div class="t" style="left:113.90px;top:340.94px;font-size:27.60px;line-height:27.60px;color:#ccccdc;font-family:'Liberation Sans',sans-serif;letter-spacing:0.106px;-webkit-text-stroke:0.5px currentColor;">2025-12-29T09:20:15Z</div>
<div style="position:absolute;left:459.00px;top:331.10px;width:252.80px;height:49.40px;box-sizing:border-box;border:1.3px solid rgba(204,204,220,0.12);"></div>
<div class="t" style="left:462.60px;top:340.94px;font-size:27.60px;line-height:27.60px;color:#ccccdc;font-family:'Liberation Sans',sans-serif;letter-spacing:-0.159px;-webkit-text-stroke:0.5px currentColor;">DescribeSnapshots</div>
<div style="position:absolute;left:766.70px;top:331.10px;width:271.67px;height:49.40px;box-sizing:border-box;border:1.3px solid rgba(204,204,220,0.12);"></div>
<div class="t" style="left:770.30px;top:340.94px;font-size:27.60px;line-height:27.60px;color:#ccccdc;font-family:'Liberation Sans',sans-serif;letter-spacing:-0.224px;-webkit-text-stroke:0.5px currentColor;">ec2.amazonaws.com</div>
<div style="position:absolute;left:1132.00px;top:331.10px;width:152.50px;height:49.40px;box-sizing:border-box;border:1.3px solid rgba(204,204,220,0.12);"></div>
<div class="t" style="left:1135.60px;top:340.94px;font-size:27.60px;line-height:27.60px;color:#ccccdc;font-family:'Liberation Sans',sans-serif;letter-spacing:-0.287px;-webkit-text-stroke:0.5px currentColor;">AwsApiCall</div>
<div style="position:absolute;left:1397.00px;top:331.10px;width:139.60px;height:49.40px;box-sizing:border-box;border:1.3px solid rgba(204,204,220,0.12);"></div>
<div class="t" style="left:1400.60px;top:340.94px;font-size:27.60px;line-height:27.60px;color:#ccccdc;font-family:'Liberation Sans',sans-serif;letter-spacing:0.496px;-webkit-text-stroke:0.5px currentColor;">us-west-2</div>
<div style="position:absolute;left:1643.20px;top:331.10px;width:43.35px;height:49.40px;box-sizing:border-box;border:1.3px solid rgba(204,204,220,0.12);"></div>
<div class="t" style="left:1646.80px;top:340.94px;font-size:27.60px;line-height:27.60px;color:#ccccdc;font-family:'Liberation Sans',sans-serif;-webkit-text-stroke:0.5px currentColor;">1</div>
<div style="position:absolute;left:0.00px;top:452.72px;width:1654.00px;height:1.30px;background:rgba(204,204,220,0.12);"></div>
<svg style="position:absolute;left:14.00px;top:407.94px;" width="27.00" height="22.00" viewBox="0 0 27 22" fill="none"><path d="M2.2 11 C5 5 9 2.6 13.5 2.6 C18 2.6 22 5 24.8 11 C22 17 18 19.4 13.5 19.4 C9 19.4 5 17 2.2 11 Z" stroke="#ccccdc" stroke-width="2.4" stroke-linejoin="round"/><circle cx="13.5" cy="11" r="3.7" stroke="#ccccdc" stroke-width="2.4"/></svg>
<svg style="position:absolute;left:54.00px;top:407.94px;" width="27.00" height="26.00" viewBox="0 0 27 26" fill="none"><circle cx="20.6" cy="5.8" r="3.7" stroke="#ccccdc" stroke-width="2.3"/><circle cx="6.1" cy="12.8" r="3.7" stroke="#ccccdc" stroke-width="2.3"/><circle cx="20.6" cy="20.2" r="3.7" stroke="#ccccdc" stroke-width="2.3"/><path d="M9.4 11.2 L17.3 7.4 M9.4 14.5 L17.3 18.5" stroke="#ccccdc" stroke-width="2.3"/></svg>
<div style="position:absolute;left:110.30px;top:395.86px;width:300.37px;height:49.40px;box-sizing:border-box;border:1.3px solid rgba(204,204,220,0.12);"></div>
<div class="t" style="left:113.90px;top:405.70px;font-size:27.60px;line-height:27.60px;color:#ccccdc;font-family:'Liberation Sans',sans-serif;letter-spacing:0.106px;-webkit-text-stroke:0.5px currentColor;">2025-12-29T09:20:07Z</div>
<div style="position:absolute;left:459.00px;top:395.86px;width:191.50px;height:49.40px;box-sizing:border-box;border:1.3px solid rgba(204,204,220,0.12);"></div>
<div class="t" style="left:462.60px;top:405.70px;font-size:27.60px;line-height:27.60px;color:#ccccdc;font-family:'Liberation Sans',sans-serif;letter-spacing:-0.189px;-webkit-text-stroke:0.5px currentColor;">ListExecutions</div>
<div style="position:absolute;left:766.70px;top:395.86px;width:300.70px;height:49.40px;box-sizing:border-box;border:1.3px solid rgba(204,204,220,0.12);"></div>
<div class="t" style="left:770.30px;top:405.70px;font-size:27.60px;line-height:27.60px;color:#ccccdc;font-family:'Liberation Sans',sans-serif;letter-spacing:-0.194px;-webkit-text-stroke:0.5px currentColor;">states.amazonaws.com</div>
<div style="position:absolute;left:1132.00px;top:395.86px;width:152.50px;height:49.40px;box-sizing:border-box;border:1.3px solid rgba(204,204,220,0.12);"></div>
<div class="t" style="left:1135.60px;top:405.70px;font-size:27.60px;line-height:27.60px;color:#ccccdc;font-family:'Liberation Sans',sans-serif;letter-spacing:-0.287px;-webkit-text-stroke:0.5px currentColor;">AwsApiCall</div>
<div style="position:absolute;left:1397.00px;top:395.86px;width:133.70px;height:49.40px;box-sizing:border-box;border:1.3px solid rgba(204,204,220,0.12);"></div>
<div class="t" style="left:1400.60px;top:405.70px;font-size:27.60px;line-height:27.60px;color:#ccccdc;font-family:'Liberation Sans',sans-serif;letter-spacing:0.331px;-webkit-text-stroke:0.5px currentColor;">us-east-2</div>
<div style="position:absolute;left:1643.20px;top:395.86px;width:43.35px;height:49.40px;box-sizing:border-box;border:1.3px solid rgba(204,204,220,0.12);"></div>
<div class="t" style="left:1646.80px;top:405.70px;font-size:27.60px;line-height:27.60px;color:#ccccdc;font-family:'Liberation Sans',sans-serif;-webkit-text-stroke:0.5px currentColor;">3</div>
<div style="position:absolute;left:0.00px;top:517.48px;width:1654.00px;height:1.30px;background:rgba(204,204,220,0.12);"></div>
<svg style="position:absolute;left:14.00px;top:472.70px;" width="27.00" height="22.00" viewBox="0 0 27 22" fill="none"><path d="M2.2 11 C5 5 9 2.6 13.5 2.6 C18 2.6 22 5 24.8 11 C22 17 18 19.4 13.5 19.4 C9 19.4 5 17 2.2 11 Z" stroke="#ccccdc" stroke-width="2.4" stroke-linejoin="round"/><circle cx="13.5" cy="11" r="3.7" stroke="#ccccdc" stroke-width="2.4"/></svg>
<svg style="position:absolute;left:54.00px;top:472.70px;" width="27.00" height="26.00" viewBox="0 0 27 26" fill="none"><circle cx="20.6" cy="5.8" r="3.7" stroke="#ccccdc" stroke-width="2.3"/><circle cx="6.1" cy="12.8" r="3.7" stroke="#ccccdc" stroke-width="2.3"/><circle cx="20.6" cy="20.2" r="3.7" stroke="#ccccdc" stroke-width="2.3"/><path d="M9.4 11.2 L17.3 7.4 M9.4 14.5 L17.3 18.5" stroke="#ccccdc" stroke-width="2.3"/></svg>
<div style="position:absolute;left:110.30px;top:460.62px;width:300.37px;height:49.40px;box-sizing:border-box;border:1.3px solid rgba(204,204,220,0.12);"></div>
<div class="t" style="left:113.90px;top:470.46px;font-size:27.60px;line-height:27.60px;color:#ccccdc;font-family:'Liberation Sans',sans-serif;letter-spacing:0.106px;-webkit-text-stroke:0.5px currentColor;">2025-12-29T09:20:00Z</div>
<div style="position:absolute;left:459.00px;top:460.62px;width:252.80px;height:49.40px;box-sizing:border-box;border:1.3px solid rgba(204,204,220,0.12);"></div>
<div class="t" style="left:462.60px;top:470.46px;font-size:27.60px;line-height:27.60px;color:#ccccdc;font-family:'Liberation Sans',sans-serif;letter-spacing:-0.159px;-webkit-text-stroke:0.5px currentColor;">DescribeSnapshots</div>
<div style="position:absolute;left:766.70px;top:460.62px;width:271.67px;height:49.40px;box-sizing:border-box;border:1.3px solid rgba(204,204,220,0.12);"></div>
<div class="t" style="left:770.30px;top:470.46px;font-size:27.60px;line-height:27.60px;color:#ccccdc;font-family:'Liberation Sans',sans-serif;letter-spacing:-0.224px;-webkit-text-stroke:0.5px currentColor;">ec2.amazonaws.com</div>
<div style="position:absolute;left:1132.00px;top:460.62px;width:152.50px;height:49.40px;box-sizing:border-box;border:1.3px solid rgba(204,204,220,0.12);"></div>
<div class="t" style="left:1135.60px;top:470.46px;font-size:27.60px;line-height:27.60px;color:#ccccdc;font-family:'Liberation Sans',sans-serif;letter-spacing:-0.287px;-webkit-text-stroke:0.5px currentColor;">AwsApiCall</div>
<div style="position:absolute;left:1397.00px;top:460.62px;width:140.86px;height:49.40px;box-sizing:border-box;border:1.3px solid rgba(204,204,220,0.12);"></div>
<div class="t" style="left:1400.60px;top:470.46px;font-size:27.60px;line-height:27.60px;color:#ccccdc;font-family:'Liberation Sans',sans-serif;letter-spacing:0.459px;-webkit-text-stroke:0.5px currentColor;">eu-west-1</div>
<div style="position:absolute;left:1643.20px;top:460.62px;width:43.35px;height:49.40px;box-sizing:border-box;border:1.3px solid rgba(204,204,220,0.12);"></div>
<div class="t" style="left:1646.80px;top:470.46px;font-size:27.60px;line-height:27.60px;color:#ccccdc;font-family:'Liberation Sans',sans-serif;-webkit-text-stroke:0.5px currentColor;">1</div>
<div style="position:absolute;left:0.00px;top:582.24px;width:1654.00px;height:1.30px;background:rgba(204,204,220,0.12);"></div>
<svg style="position:absolute;left:14.00px;top:537.46px;" width="27.00" height="22.00" viewBox="0 0 27 22" fill="none"><path d="M2.2 11 C5 5 9 2.6 13.5 2.6 C18 2.6 22 5 24.8 11 C22 17 18 19.4 13.5 19.4 C9 19.4 5 17 2.2 11 Z" stroke="#ccccdc" stroke-width="2.4" stroke-linejoin="round"/><circle cx="13.5" cy="11" r="3.7" stroke="#ccccdc" stroke-width="2.4"/></svg>
<svg style="position:absolute;left:54.00px;top:537.46px;" width="27.00" height="26.00" viewBox="0 0 27 26" fill="none"><circle cx="20.6" cy="5.8" r="3.7" stroke="#ccccdc" stroke-width="2.3"/><circle cx="6.1" cy="12.8" r="3.7" stroke="#ccccdc" stroke-width="2.3"/><circle cx="20.6" cy="20.2" r="3.7" stroke="#ccccdc" stroke-width="2.3"/><path d="M9.4 11.2 L17.3 7.4 M9.4 14.5 L17.3 18.5" stroke="#ccccdc" stroke-width="2.3"/></svg>
<div style="position:absolute;left:110.30px;top:525.38px;width:300.37px;height:49.40px;box-sizing:border-box;border:1.3px solid rgba(204,204,220,0.12);"></div>
<div class="t" style="left:113.90px;top:535.22px;font-size:27.60px;line-height:27.60px;color:#ccccdc;font-family:'Liberation Sans',sans-serif;letter-spacing:0.106px;-webkit-text-stroke:0.5px currentColor;">2025-12-29T09:19:56Z</div>
<div style="position:absolute;left:459.00px;top:525.38px;width:191.50px;height:49.40px;box-sizing:border-box;border:1.3px solid rgba(204,204,220,0.12);"></div>
<div class="t" style="left:462.60px;top:535.22px;font-size:27.60px;line-height:27.60px;color:#ccccdc;font-family:'Liberation Sans',sans-serif;letter-spacing:-0.189px;-webkit-text-stroke:0.5px currentColor;">ListExecutions</div>
<div style="position:absolute;left:766.70px;top:525.38px;width:300.70px;height:49.40px;box-sizing:border-box;border:1.3px solid rgba(204,204,220,0.12);"></div>
<div class="t" style="left:770.30px;top:535.22px;font-size:27.60px;line-height:27.60px;color:#ccccdc;font-family:'Liberation Sans',sans-serif;letter-spacing:-0.194px;-webkit-text-stroke:0.5px currentColor;">states.amazonaws.com</div>
<div style="position:absolute;left:1132.00px;top:525.38px;width:152.50px;height:49.40px;box-sizing:border-box;border:1.3px solid rgba(204,204,220,0.12);"></div>
<div class="t" style="left:1135.60px;top:535.22px;font-size:27.60px;line-height:27.60px;color:#ccccdc;font-family:'Liberation Sans',sans-serif;letter-spacing:-0.287px;-webkit-text-stroke:0.5px currentColor;">AwsApiCall</div>
<div style="position:absolute;left:1397.00px;top:525.38px;width:133.70px;height:49.40px;box-sizing:border-box;border:1.3px solid rgba(204,204,220,0.12);"></div>
<div class="t" style="left:1400.60px;top:535.22px;font-size:27.60px;line-height:27.60px;color:#ccccdc;font-family:'Liberation Sans',sans-serif;letter-spacing:0.331px;-webkit-text-stroke:0.5px currentColor;">us-east-2</div>
<div style="position:absolute;left:1643.20px;top:525.38px;width:43.35px;height:49.40px;box-sizing:border-box;border:1.3px solid rgba(204,204,220,0.12);"></div>
<div class="t" style="left:1646.80px;top:535.22px;font-size:27.60px;line-height:27.60px;color:#ccccdc;font-family:'Liberation Sans',sans-serif;-webkit-text-stroke:0.5px currentColor;">3</div>
<div style="position:absolute;left:0.00px;top:647.00px;width:1654.00px;height:1.30px;background:rgba(204,204,220,0.12);"></div>
<svg style="position:absolute;left:14.00px;top:602.22px;" width="27.00" height="22.00" viewBox="0 0 27 22" fill="none"><path d="M2.2 11 C5 5 9 2.6 13.5 2.6 C18 2.6 22 5 24.8 11 C22 17 18 19.4 13.5 19.4 C9 19.4 5 17 2.2 11 Z" stroke="#ccccdc" stroke-width="2.4" stroke-linejoin="round"/><circle cx="13.5" cy="11" r="3.7" stroke="#ccccdc" stroke-width="2.4"/></svg>
<svg style="position:absolute;left:54.00px;top:602.22px;" width="27.00" height="26.00" viewBox="0 0 27 26" fill="none"><circle cx="20.6" cy="5.8" r="3.7" stroke="#ccccdc" stroke-width="2.3"/><circle cx="6.1" cy="12.8" r="3.7" stroke="#ccccdc" stroke-width="2.3"/><circle cx="20.6" cy="20.2" r="3.7" stroke="#ccccdc" stroke-width="2.3"/><path d="M9.4 11.2 L17.3 7.4 M9.4 14.5 L17.3 18.5" stroke="#ccccdc" stroke-width="2.3"/></svg>
<div style="position:absolute;left:110.30px;top:590.14px;width:300.37px;height:49.40px;box-sizing:border-box;border:1.3px solid rgba(204,204,220,0.12);"></div>
<div class="t" style="left:113.90px;top:599.98px;font-size:27.60px;line-height:27.60px;color:#ccccdc;font-family:'Liberation Sans',sans-serif;letter-spacing:0.106px;-webkit-text-stroke:0.5px currentColor;">2025-12-29T09:19:56Z</div>
<div style="position:absolute;left:459.00px;top:590.14px;width:191.50px;height:49.40px;box-sizing:border-box;border:1.3px solid rgba(204,204,220,0.12);"></div>
<div class="t" style="left:462.60px;top:599.98px;font-size:27.60px;line-height:27.60px;color:#ccccdc;font-family:'Liberation Sans',sans-serif;letter-spacing:-0.189px;-webkit-text-stroke:0.5px currentColor;">ListExecutions</div>
<div style="position:absolute;left:766.70px;top:590.14px;width:300.70px;height:49.40px;box-sizing:border-box;border:1.3px solid rgba(204,204,220,0.12);"></div>
<div class="t" style="left:770.30px;top:599.98px;font-size:27.60px;line-height:27.60px;color:#ccccdc;font-family:'Liberation Sans',sans-serif;letter-spacing:-0.194px;-webkit-text-stroke:0.5px currentColor;">states.amazonaws.com</div>
<div style="position:absolute;left:1132.00px;top:590.14px;width:152.50px;height:49.40px;box-sizing:border-box;border:1.3px solid rgba(204,204,220,0.12);"></div>
<div class="t" style="left:1135.60px;top:599.98px;font-size:27.60px;line-height:27.60px;color:#ccccdc;font-family:'Liberation Sans',sans-serif;letter-spacing:-0.287px;-webkit-text-stroke:0.5px currentColor;">AwsApiCall</div>
<div style="position:absolute;left:1397.00px;top:590.14px;width:133.70px;height:49.40px;box-sizing:border-box;border:1.3px solid rgba(204,204,220,0.12);"></div>
<div class="t" style="left:1400.60px;top:599.98px;font-size:27.60px;line-height:27.60px;color:#ccccdc;font-family:'Liberation Sans',sans-serif;letter-spacing:0.331px;-webkit-text-stroke:0.5px currentColor;">us-east-2</div>
<div style="position:absolute;left:1643.20px;top:590.14px;width:43.35px;height:49.40px;box-sizing:border-box;border:1.3px solid rgba(204,204,220,0.12);"></div>
<div class="t" style="left:1646.80px;top:599.98px;font-size:27.60px;line-height:27.60px;color:#ccccdc;font-family:'Liberation Sans',sans-serif;-webkit-text-stroke:0.5px currentColor;">3</div>
<div style="position:absolute;left:0.00px;top:711.76px;width:1654.00px;height:1.30px;background:rgba(204,204,220,0.12);"></div>
<svg style="position:absolute;left:14.00px;top:666.98px;" width="27.00" height="22.00" viewBox="0 0 27 22" fill="none"><path d="M2.2 11 C5 5 9 2.6 13.5 2.6 C18 2.6 22 5 24.8 11 C22 17 18 19.4 13.5 19.4 C9 19.4 5 17 2.2 11 Z" stroke="#ccccdc" stroke-width="2.4" stroke-linejoin="round"/><circle cx="13.5" cy="11" r="3.7" stroke="#ccccdc" stroke-width="2.4"/></svg>
<svg style="position:absolute;left:54.00px;top:666.98px;" width="27.00" height="26.00" viewBox="0 0 27 26" fill="none"><circle cx="20.6" cy="5.8" r="3.7" stroke="#ccccdc" stroke-width="2.3"/><circle cx="6.1" cy="12.8" r="3.7" stroke="#ccccdc" stroke-width="2.3"/><circle cx="20.6" cy="20.2" r="3.7" stroke="#ccccdc" stroke-width="2.3"/><path d="M9.4 11.2 L17.3 7.4 M9.4 14.5 L17.3 18.5" stroke="#ccccdc" stroke-width="2.3"/></svg>
<div style="position:absolute;left:110.30px;top:654.90px;width:300.37px;height:49.40px;box-sizing:border-box;border:1.3px solid rgba(204,204,220,0.12);"></div>
<div class="t" style="left:113.90px;top:664.74px;font-size:27.60px;line-height:27.60px;color:#ccccdc;font-family:'Liberation Sans',sans-serif;letter-spacing:0.106px;-webkit-text-stroke:0.5px currentColor;">2025-12-29T09:19:52Z</div>
<div style="position:absolute;left:459.00px;top:654.90px;width:252.80px;height:49.40px;box-sizing:border-box;border:1.3px solid rgba(204,204,220,0.12);"></div>
<div class="t" style="left:462.60px;top:664.74px;font-size:27.60px;line-height:27.60px;color:#ccccdc;font-family:'Liberation Sans',sans-serif;letter-spacing:-0.159px;-webkit-text-stroke:0.5px currentColor;">DescribeSnapshots</div>
<div style="position:absolute;left:766.70px;top:654.90px;width:271.67px;height:49.40px;box-sizing:border-box;border:1.3px solid rgba(204,204,220,0.12);"></div>
<div class="t" style="left:770.30px;top:664.74px;font-size:27.60px;line-height:27.60px;color:#ccccdc;font-family:'Liberation Sans',sans-serif;letter-spacing:-0.224px;-webkit-text-stroke:0.5px currentColor;">ec2.amazonaws.com</div>
<div style="position:absolute;left:1132.00px;top:654.90px;width:152.50px;height:49.40px;box-sizing:border-box;border:1.3px solid rgba(204,204,220,0.12);"></div>
<div class="t" style="left:1135.60px;top:664.74px;font-size:27.60px;line-height:27.60px;color:#ccccdc;font-family:'Liberation Sans',sans-serif;letter-spacing:-0.287px;-webkit-text-stroke:0.5px currentColor;">AwsApiCall</div>
<div style="position:absolute;left:1397.00px;top:654.90px;width:162.70px;height:49.40px;box-sizing:border-box;border:1.3px solid rgba(204,204,220,0.12);"></div>
<div class="t" style="left:1400.60px;top:664.74px;font-size:27.60px;line-height:27.60px;color:#ccccdc;font-family:'Liberation Sans',sans-serif;letter-spacing:-0.053px;-webkit-text-stroke:0.5px currentColor;">eu-central-1</div>
<div style="position:absolute;left:1643.20px;top:654.90px;width:43.35px;height:49.40px;box-sizing:border-box;border:1.3px solid rgba(204,204,220,0.12);"></div>
<div class="t" style="left:1646.80px;top:664.74px;font-size:27.60px;line-height:27.60px;color:#ccccdc;font-family:'Liberation Sans',sans-serif;-webkit-text-stroke:0.5px currentColor;">5</div>
<div style="position:absolute;left:0.00px;top:776.52px;width:1654.00px;height:1.30px;background:rgba(204,204,220,0.12);"></div>
<svg style="position:absolute;left:14.00px;top:731.74px;" width="27.00" height="22.00" viewBox="0 0 27 22" fill="none"><path d="M2.2 11 C5 5 9 2.6 13.5 2.6 C18 2.6 22 5 24.8 11 C22 17 18 19.4 13.5 19.4 C9 19.4 5 17 2.2 11 Z" stroke="#ccccdc" stroke-width="2.4" stroke-linejoin="round"/><circle cx="13.5" cy="11" r="3.7" stroke="#ccccdc" stroke-width="2.4"/></svg>
<svg style="position:absolute;left:54.00px;top:731.74px;" width="27.00" height="26.00" viewBox="0 0 27 26" fill="none"><circle cx="20.6" cy="5.8" r="3.7" stroke="#ccccdc" stroke-width="2.3"/><circle cx="6.1" cy="12.8" r="3.7" stroke="#ccccdc" stroke-width="2.3"/><circle cx="20.6" cy="20.2" r="3.7" stroke="#ccccdc" stroke-width="2.3"/><path d="M9.4 11.2 L17.3 7.4 M9.4 14.5 L17.3 18.5" stroke="#ccccdc" stroke-width="2.3"/></svg>
<div style="position:absolute;left:110.30px;top:719.66px;width:300.37px;height:49.40px;box-sizing:border-box;border:1.3px solid rgba(204,204,220,0.12);"></div>
<div class="t" style="left:113.90px;top:729.50px;font-size:27.60px;line-height:27.60px;color:#ccccdc;font-family:'Liberation Sans',sans-serif;letter-spacing:0.106px;-webkit-text-stroke:0.5px currentColor;">2025-12-29T09:19:51Z</div>
<div style="position:absolute;left:459.00px;top:719.66px;width:191.50px;height:49.40px;box-sizing:border-box;border:1.3px solid rgba(204,204,220,0.12);"></div>
<div class="t" style="left:462.60px;top:729.50px;font-size:27.60px;line-height:27.60px;color:#ccccdc;font-family:'Liberation Sans',sans-serif;letter-spacing:-0.189px;-webkit-text-stroke:0.5px currentColor;">ListExecutions</div>
<div style="position:absolute;left:766.70px;top:719.66px;width:300.70px;height:49.40px;box-sizing:border-box;border:1.3px solid rgba(204,204,220,0.12);"></div>
<div class="t" style="left:770.30px;top:729.50px;font-size:27.60px;line-height:27.60px;color:#ccccdc;font-family:'Liberation Sans',sans-serif;letter-spacing:-0.194px;-webkit-text-stroke:0.5px currentColor;">states.amazonaws.com</div>
<div style="position:absolute;left:1132.00px;top:719.66px;width:152.50px;height:49.40px;box-sizing:border-box;border:1.3px solid rgba(204,204,220,0.12);"></div>
<div class="t" style="left:1135.60px;top:729.50px;font-size:27.60px;line-height:27.60px;color:#ccccdc;font-family:'Liberation Sans',sans-serif;letter-spacing:-0.287px;-webkit-text-stroke:0.5px currentColor;">AwsApiCall</div>
<div style="position:absolute;left:1397.00px;top:719.66px;width:133.70px;height:49.40px;box-sizing:border-box;border:1.3px solid rgba(204,204,220,0.12);"></div>
<div class="t" style="left:1400.60px;top:729.50px;font-size:27.60px;line-height:27.60px;color:#ccccdc;font-family:'Liberation Sans',sans-serif;letter-spacing:0.331px;-webkit-text-stroke:0.5px currentColor;">us-east-2</div>
<div style="position:absolute;left:1643.20px;top:719.66px;width:43.35px;height:49.40px;box-sizing:border-box;border:1.3px solid rgba(204,204,220,0.12);"></div>
<div class="t" style="left:1646.80px;top:729.50px;font-size:27.60px;line-height:27.60px;color:#ccccdc;font-family:'Liberation Sans',sans-serif;-webkit-text-stroke:0.5px currentColor;">3</div>
<div style="position:absolute;left:0.00px;top:841.28px;width:1654.00px;height:1.30px;background:rgba(204,204,220,0.12);"></div>
<svg style="position:absolute;left:14.00px;top:796.50px;" width="27.00" height="22.00" viewBox="0 0 27 22" fill="none"><path d="M2.2 11 C5 5 9 2.6 13.5 2.6 C18 2.6 22 5 24.8 11 C22 17 18 19.4 13.5 19.4 C9 19.4 5 17 2.2 11 Z" stroke="#ccccdc" stroke-width="2.4" stroke-linejoin="round"/><circle cx="13.5" cy="11" r="3.7" stroke="#ccccdc" stroke-width="2.4"/></svg>
<svg style="position:absolute;left:54.00px;top:796.50px;" width="27.00" height="26.00" viewBox="0 0 27 26" fill="none"><circle cx="20.6" cy="5.8" r="3.7" stroke="#ccccdc" stroke-width="2.3"/><circle cx="6.1" cy="12.8" r="3.7" stroke="#ccccdc" stroke-width="2.3"/><circle cx="20.6" cy="20.2" r="3.7" stroke="#ccccdc" stroke-width="2.3"/><path d="M9.4 11.2 L17.3 7.4 M9.4 14.5 L17.3 18.5" stroke="#ccccdc" stroke-width="2.3"/></svg>
<div style="position:absolute;left:110.30px;top:784.42px;width:300.37px;height:49.40px;box-sizing:border-box;border:1.3px solid rgba(204,204,220,0.12);"></div>
<div class="t" style="left:113.90px;top:794.26px;font-size:27.60px;line-height:27.60px;color:#ccccdc;font-family:'Liberation Sans',sans-serif;letter-spacing:0.106px;-webkit-text-stroke:0.5px currentColor;">2025-12-29T09:19:50Z</div>
<div style="position:absolute;left:459.00px;top:784.42px;width:191.50px;height:49.40px;box-sizing:border-box;border:1.3px solid rgba(204,204,220,0.12);"></div>
<div class="t" style="left:462.60px;top:794.26px;font-size:27.60px;line-height:27.60px;color:#ccccdc;font-family:'Liberation Sans',sans-serif;letter-spacing:-0.189px;-webkit-text-stroke:0.5px currentColor;">ListExecutions</div>
<div style="position:absolute;left:766.70px;top:784.42px;width:300.70px;height:49.40px;box-sizing:border-box;border:1.3px solid rgba(204,204,220,0.12);"></div>
<div class="t" style="left:770.30px;top:794.26px;font-size:27.60px;line-height:27.60px;color:#ccccdc;font-family:'Liberation Sans',sans-serif;letter-spacing:-0.194px;-webkit-text-stroke:0.5px currentColor;">states.amazonaws.com</div>
<div style="position:absolute;left:1132.00px;top:784.42px;width:152.50px;height:49.40px;box-sizing:border-box;border:1.3px solid rgba(204,204,220,0.12);"></div>
<div class="t" style="left:1135.60px;top:794.26px;font-size:27.60px;line-height:27.60px;color:#ccccdc;font-family:'Liberation Sans',sans-serif;letter-spacing:-0.287px;-webkit-text-stroke:0.5px currentColor;">AwsApiCall</div>
<div style="position:absolute;left:1397.00px;top:784.42px;width:133.70px;height:49.40px;box-sizing:border-box;border:1.3px solid rgba(204,204,220,0.12);"></div>
<div class="t" style="left:1400.60px;top:794.26px;font-size:27.60px;line-height:27.60px;color:#ccccdc;font-family:'Liberation Sans',sans-serif;letter-spacing:0.331px;-webkit-text-stroke:0.5px currentColor;">us-east-2</div>
<div style="position:absolute;left:1643.20px;top:784.42px;width:43.35px;height:49.40px;box-sizing:border-box;border:1.3px solid rgba(204,204,220,0.12);"></div>
<div class="t" style="left:1646.80px;top:794.26px;font-size:27.60px;line-height:27.60px;color:#ccccdc;font-family:'Liberation Sans',sans-serif;-webkit-text-stroke:0.5px currentColor;">3</div>
<div style="position:absolute;left:0.00px;top:906.04px;width:1654.00px;height:1.30px;background:rgba(204,204,220,0.12);"></div>
<svg style="position:absolute;left:14.00px;top:861.26px;" width="27.00" height="22.00" viewBox="0 0 27 22" fill="none"><path d="M2.2 11 C5 5 9 2.6 13.5 2.6 C18 2.6 22 5 24.8 11 C22 17 18 19.4 13.5 19.4 C9 19.4 5 17 2.2 11 Z" stroke="#ccccdc" stroke-width="2.4" stroke-linejoin="round"/><circle cx="13.5" cy="11" r="3.7" stroke="#ccccdc" stroke-width="2.4"/></svg>
<svg style="position:absolute;left:54.00px;top:861.26px;" width="27.00" height="26.00" viewBox="0 0 27 26" fill="none"><circle cx="20.6" cy="5.8" r="3.7" stroke="#ccccdc" stroke-width="2.3"/><circle cx="6.1" cy="12.8" r="3.7" stroke="#ccccdc" stroke-width="2.3"/><circle cx="20.6" cy="20.2" r="3.7" stroke="#ccccdc" stroke-width="2.3"/><path d="M9.4 11.2 L17.3 7.4 M9.4 14.5 L17.3 18.5" stroke="#ccccdc" stroke-width="2.3"/></svg>
<div style="position:absolute;left:110.30px;top:849.18px;width:300.37px;height:49.40px;box-sizing:border-box;border:1.3px solid rgba(204,204,220,0.12);"></div>
<div class="t" style="left:113.90px;top:859.02px;font-size:27.60px;line-height:27.60px;color:#ccccdc;font-family:'Liberation Sans',sans-serif;letter-spacing:0.106px;-webkit-text-stroke:0.5px currentColor;">2025-12-29T09:19:50Z</div>
<div style="position:absolute;left:459.00px;top:849.18px;width:191.50px;height:49.40px;box-sizing:border-box;border:1.3px solid rgba(204,204,220,0.12);"></div>
<div class="t" style="left:462.60px;top:859.02px;font-size:27.60px;line-height:27.60px;color:#ccccdc;font-family:'Liberation Sans',sans-serif;letter-spacing:-0.189px;-webkit-text-stroke:0.5px currentColor;">ListExecutions</div>
<div style="position:absolute;left:766.70px;top:849.18px;width:300.70px;height:49.40px;box-sizing:border-box;border:1.3px solid rgba(204,204,220,0.12);"></div>
<div class="t" style="left:770.30px;top:859.02px;font-size:27.60px;line-height:27.60px;color:#ccccdc;font-family:'Liberation Sans',sans-serif;letter-spacing:-0.194px;-webkit-text-stroke:0.5px currentColor;">states.amazonaws.com</div>
<div style="position:absolute;left:1132.00px;top:849.18px;width:152.50px;height:49.40px;box-sizing:border-box;border:1.3px solid rgba(204,204,220,0.12);"></div>
<div class="t" style="left:1135.60px;top:859.02px;font-size:27.60px;line-height:27.60px;color:#ccccdc;font-family:'Liberation Sans',sans-serif;letter-spacing:-0.287px;-webkit-text-stroke:0.5px currentColor;">AwsApiCall</div>
<div style="position:absolute;left:1397.00px;top:849.18px;width:133.70px;height:49.40px;box-sizing:border-box;border:1.3px solid rgba(204,204,220,0.12);"></div>
<div class="t" style="left:1400.60px;top:859.02px;font-size:27.60px;line-height:27.60px;color:#ccccdc;font-family:'Liberation Sans',sans-serif;letter-spacing:0.331px;-webkit-text-stroke:0.5px currentColor;">us-east-2</div>
<div style="position:absolute;left:1643.20px;top:849.18px;width:43.35px;height:49.40px;box-sizing:border-box;border:1.3px solid rgba(204,204,220,0.12);"></div>
<div class="t" style="left:1646.80px;top:859.02px;font-size:27.60px;line-height:27.60px;color:#ccccdc;font-family:'Liberation Sans',sans-serif;-webkit-text-stroke:0.5px currentColor;">3</div>
<div style="position:absolute;left:448.60px;top:1.00px;width:1.30px;height:892.00px;background:rgba(204,204,220,0.12);"></div>
<div style="position:absolute;left:756.30px;top:1.00px;width:1.30px;height:892.00px;background:rgba(204,204,220,0.12);"></div>
<div style="position:absolute;left:1121.60px;top:1.00px;width:1.30px;height:892.00px;background:rgba(204,204,220,0.12);"></div>
<div style="position:absolute;left:1386.60px;top:1.00px;width:1.30px;height:892.00px;background:rgba(204,204,220,0.12);"></div>
<div style="position:absolute;left:1632.80px;top:1.00px;width:1.30px;height:892.00px;background:rgba(204,204,220,0.12);"></div>
<div style="position:absolute;left:99.90px;top:1.00px;width:1.30px;height:892.00px;background:rgba(0,0,0,0);"></div>
</div>
<div style="position:absolute;left:851.00px;top:532.90px;width:1654.00px;height:1.30px;background:rgba(204,204,220,0.12);"></div>
<div style="position:absolute;left:950.90px;top:488.60px;width:1.30px;height:39.00px;background:rgba(204,204,220,0.12);"></div>
<div style="position:absolute;left:1299.60px;top:488.60px;width:1.30px;height:39.00px;background:rgba(204,204,220,0.12);"></div>
<div style="position:absolute;left:1607.30px;top:488.60px;width:1.30px;height:39.00px;background:rgba(204,204,220,0.12);"></div>
<div style="position:absolute;left:1972.60px;top:488.60px;width:1.30px;height:39.00px;background:rgba(204,204,220,0.12);"></div>
<div style="position:absolute;left:2237.60px;top:488.60px;width:1.30px;height:39.00px;background:rgba(204,204,220,0.12);"></div>
<div style="position:absolute;left:2483.80px;top:488.60px;width:1.30px;height:39.00px;background:rgba(204,204,220,0.12);"></div>
<div class="t" style="left:973.10px;top:493.91px;font-size:26.80px;line-height:26.80px;color:#ccccdc;font-family:'Liberation Sans',sans-serif;letter-spacing:0.547px;-webkit-text-stroke:0.7px currentColor;">eventTime</div>
<svg style="position:absolute;left:1112.00px;top:495.50px;" width="26.00" height="26.00" viewBox="0 0 26 26" fill="none"><path d="M3.8 2.5 H21.4 C23.5 2.5 24.3 4.9 22.9 6.5 L15 14.8 V20.8 L10.1 23.6 V14.8 L2.3 6.5 C0.9 4.9 1.7 2.5 3.8 2.5 Z M2.8 7.6 H22.4" stroke="#9a9ba6" stroke-width="2.3" stroke-linejoin="round"/></svg>
<div style="position:absolute;left:1266.60px;top:496.40px;width:5.20px;height:5.20px;background:#ccccdc;border-radius:50%;"></div>
<div style="position:absolute;left:1266.60px;top:504.80px;width:5.20px;height:5.20px;background:#ccccdc;border-radius:50%;"></div>
<div style="position:absolute;left:1266.60px;top:513.10px;width:5.20px;height:5.20px;background:#ccccdc;border-radius:50%;"></div>
<div class="t" style="left:1320.90px;top:493.91px;font-size:26.80px;line-height:26.80px;color:#ccccdc;font-family:'Liberation Sans',sans-serif;letter-spacing:0.393px;-webkit-text-stroke:0.7px currentColor;">eventName</div>
<svg style="position:absolute;left:1471.50px;top:495.50px;" width="26.00" height="26.00" viewBox="0 0 26 26" fill="none"><path d="M3.8 2.5 H21.4 C23.5 2.5 24.3 4.9 22.9 6.5 L15 14.8 V20.8 L10.1 23.6 V14.8 L2.3 6.5 C0.9 4.9 1.7 2.5 3.8 2.5 Z M2.8 7.6 H22.4" stroke="#9a9ba6" stroke-width="2.3" stroke-linejoin="round"/></svg>
<svg style="position:absolute;left:1509.50px;top:495.50px;" width="24.00" height="24.00" viewBox="0 0 24 24" fill="none"><path d="M6.2 1.8 C3.4 2.3 1.8 4.4 1.8 7.4 V15.4 C1.8 18.4 3.4 20.6 6.2 21.1 M17.8 1.8 C20.6 2.3 22.2 4.4 22.2 7.4 V15.4 C22.2 18.4 20.6 20.6 17.8 21.1" stroke="#ccccdc" stroke-width="2.5" stroke-linecap="round"/><path d="M7.8 7.6 L16.2 15.4 M16.2 7.6 L7.8 15.4" stroke="#ccccdc" stroke-width="2.4" stroke-linecap="round"/></svg>
<div style="position:absolute;left:1573.70px;top:496.40px;width:5.20px;height:5.20px;background:#ccccdc;border-radius:50%;"></div>
<div style="position:absolute;left:1573.70px;top:504.80px;width:5.20px;height:5.20px;background:#ccccdc;border-radius:50%;"></div>
<div style="position:absolute;left:1573.70px;top:513.10px;width:5.20px;height:5.20px;background:#ccccdc;border-radius:50%;"></div>
<div class="t" style="left:1628.60px;top:493.91px;font-size:26.80px;line-height:26.80px;color:#ccccdc;font-family:'Liberation Sans',sans-serif;letter-spacing:0.502px;-webkit-text-stroke:0.7px currentColor;">eventSource</div>
<svg style="position:absolute;left:1794.50px;top:495.50px;" width="26.00" height="26.00" viewBox="0 0 26 26" fill="none"><path d="M3.8 2.5 H21.4 C23.5 2.5 24.3 4.9 22.9 6.5 L15 14.8 V20.8 L10.1 23.6 V14.8 L2.3 6.5 C0.9 4.9 1.7 2.5 3.8 2.5 Z M2.8 7.6 H22.4" stroke="#9a9ba6" stroke-width="2.3" stroke-linejoin="round"/></svg>
<svg style="position:absolute;left:1832.50px;top:495.50px;" width="24.00" height="24.00" viewBox="0 0 24 24" fill="none"><path d="M6.2 1.8 C3.4 2.3 1.8 4.4 1.8 7.4 V15.4 C1.8 18.4 3.4 20.6 6.2 21.1 M17.8 1.8 C20.6 2.3 22.2 4.4 22.2 7.4 V15.4 C22.2 18.4 20.6 20.6 17.8 21.1" stroke="#ccccdc" stroke-width="2.5" stroke-linecap="round"/><path d="M7.8 7.6 L16.2 15.4 M16.2 7.6 L7.8 15.4" stroke="#ccccdc" stroke-width="2.4" stroke-linecap="round"/></svg>
<div style="position:absolute;left:1939.40px;top:496.40px;width:5.20px;height:5.20px;background:#ccccdc;border-radius:50%;"></div>
<div style="position:absolute;left:1939.40px;top:504.80px;width:5.20px;height:5.20px;background:#ccccdc;border-radius:50%;"></div>
<div style="position:absolute;left:1939.40px;top:513.10px;width:5.20px;height:5.20px;background:#ccccdc;border-radius:50%;"></div>
<div class="t" style="left:1994.30px;top:493.91px;font-size:26.80px;line-height:26.80px;color:#ccccdc;font-family:'Liberation Sans',sans-serif;letter-spacing:0.517px;-webkit-text-stroke:0.7px currentColor;">eventType</div>
<svg style="position:absolute;left:2132.50px;top:495.50px;" width="26.00" height="26.00" viewBox="0 0 26 26" fill="none"><path d="M3.8 2.5 H21.4 C23.5 2.5 24.3 4.9 22.9 6.5 L15 14.8 V20.8 L10.1 23.6 V14.8 L2.3 6.5 C0.9 4.9 1.7 2.5 3.8 2.5 Z M2.8 7.6 H22.4" stroke="#9a9ba6" stroke-width="2.3" stroke-linejoin="round"/></svg>
<svg style="position:absolute;left:2170.50px;top:495.50px;" width="24.00" height="24.00" viewBox="0 0 24 24" fill="none"><path d="M6.2 1.8 C3.4 2.3 1.8 4.4 1.8 7.4 V15.4 C1.8 18.4 3.4 20.6 6.2 21.1 M17.8 1.8 C20.6 2.3 22.2 4.4 22.2 7.4 V15.4 C22.2 18.4 20.6 20.6 17.8 21.1" stroke="#ccccdc" stroke-width="2.5" stroke-linecap="round"/><path d="M7.8 7.6 L16.2 15.4 M16.2 7.6 L7.8 15.4" stroke="#ccccdc" stroke-width="2.4" stroke-linecap="round"/></svg>
<div style="position:absolute;left:2212.40px;top:496.40px;width:5.20px;height:5.20px;background:#ccccdc;border-radius:50%;"></div>
<div style="position:absolute;left:2212.40px;top:504.80px;width:5.20px;height:5.20px;background:#ccccdc;border-radius:50%;"></div>
<div style="position:absolute;left:2212.40px;top:513.10px;width:5.20px;height:5.20px;background:#ccccdc;border-radius:50%;"></div>
<div class="t" style="left:2258.60px;top:493.91px;font-size:26.80px;line-height:26.80px;color:#ccccdc;font-family:'Liberation Sans',sans-serif;letter-spacing:0.214px;-webkit-text-stroke:0.7px currentColor;">awsRegion</div>
<svg style="position:absolute;left:2403.30px;top:495.50px;" width="26.00" height="26.00" viewBox="0 0 26 26" fill="none"><path d="M3.8 2.5 H21.4 C23.5 2.5 24.3 4.9 22.9 6.5 L15 14.8 V20.8 L10.1 23.6 V14.8 L2.3 6.5 C0.9 4.9 1.7 2.5 3.8 2.5 Z M2.8 7.6 H22.4" stroke="#9a9ba6" stroke-width="2.3" stroke-linejoin="round"/></svg>
<svg style="position:absolute;left:2441.30px;top:495.50px;" width="24.00" height="24.00" viewBox="0 0 24 24" fill="none"><path d="M6.2 1.8 C3.4 2.3 1.8 4.4 1.8 7.4 V15.4 C1.8 18.4 3.4 20.6 6.2 21.1 M17.8 1.8 C20.6 2.3 22.2 4.4 22.2 7.4 V15.4 C22.2 18.4 20.6 20.6 17.8 21.1" stroke="#ccccdc" stroke-width="2.5" stroke-linecap="round"/><path d="M7.8 7.6 L16.2 15.4 M16.2 7.6 L7.8 15.4" stroke="#ccccdc" stroke-width="2.4" stroke-linecap="round"/></svg>
<div style="position:absolute;left:2467.00px;top:480.00px;width:52.00px;height:50.00px;background:#1c1d21;"></div>
<div style="position:absolute;left:2483.80px;top:488.60px;width:1.30px;height:39.00px;background:rgba(204,204,220,0.12);"></div>
<div style="position:absolute;left:851.00px;top:1455.00px;width:1654.00px;height:1.30px;background:rgba(204,204,220,0.12);"></div>
<div class="t" style="left:861.00px;top:1465.44px;font-size:27.00px;line-height:27.00px;color:#ccccdc;font-family:'Liberation Sans',sans-serif;letter-spacing:0.438px;-webkit-text-stroke:0.7px currentColor;">Count</div>
<div class="t" style="left:1228.40px;top:1465.44px;font-size:27.00px;line-height:27.00px;color:#ccccdc;font-family:'Liberation Sans',sans-serif;letter-spacing:-0.089px;-webkit-text-stroke:0.7px currentColor;">1000</div>
<div style="position:absolute;left:2519.00px;top:483.00px;width:1.30px;height:1023.00px;background:rgba(204,204,220,0.12);"></div>
<div class="t" style="left:2533.60px;top:497.58px;font-size:23.30px;line-height:23.30px;color:#ccccdc;font-family:'Liberation Sans',sans-serif;letter-spacing:-0.149px;-webkit-text-stroke:0.5px currentColor;">Expanded</div>
<div class="t" style="left:2533.60px;top:569.58px;font-size:23.30px;line-height:23.30px;color:#ccccdc;font-family:'Liberation Sans',sans-serif;letter-spacing:0.349px;-webkit-text-stroke:0.5px currentColor;">Newest logs first</div>
<div class="t" style="left:2533.60px;top:641.68px;font-size:23.30px;line-height:23.30px;color:#ccccdc;font-family:'Liberation Sans',sans-serif;letter-spacing:0.371px;-webkit-text-stroke:0.5px currentColor;">Log text</div>
<svg style="position:absolute;left:2799.00px;top:495.00px;" width="32.00" height="26.00" viewBox="0 0 32 26" fill="none"><path d="M4.5 2 V24" stroke="#9a9ba6" stroke-width="2.4" stroke-linecap="round"/><path d="M9.5 13 H28 M22 7 L28 13 L22 19" stroke="#9a9ba6" stroke-width="2.4" stroke-linecap="round" stroke-linejoin="round"/></svg>
<svg style="position:absolute;left:2799.00px;top:569.00px;" width="32.00" height="22.00" viewBox="0 0 32 22" fill="none"><path d="M6 19.5 V3.5 M2.5 7.5 L6 3.5 L9.5 7.5" stroke="#9a9ba6" stroke-width="2.4" stroke-linecap="round" stroke-linejoin="round"/><path d="M14.5 3.5 H29 M14.5 11 H29 M14.5 18.5 H29" stroke="#9a9ba6" stroke-width="2.4" stroke-linecap="round"/></svg>
<svg style="position:absolute;left:2799.00px;top:637.00px;" width="32.00" height="31.00" viewBox="0 0 32 31" fill="none"><path d="M3.5 3.5 H13.5 L28.5 18.5 C29.3 19.3 29.3 20.5 28.5 21.3 L21.3 28.5 C20.5 29.3 19.3 29.3 18.5 28.5 L3.5 13.5 Z" stroke="#9a9ba6" stroke-width="2.2" stroke-linejoin="round"/><circle cx="9" cy="9" r="1.8" fill="#9a9ba6"/></svg>
<div style="position:absolute;left:0;top:0;width:2880px;height:1508px;box-sizing:border-box;border:1.5px solid #37383d;border-top:none;pointer-events:none;"></div>
<svg style="position:absolute;left:0.00px;top:1490.00px;" width="18.00" height="18.00" viewBox="0 0 18 18" fill="none"><path d="M0 0 V18 H18 V17.25 A17.25 17.25 0 0 1 0.75 0 Z" fill="#0b0d0c"/><path d="M0.75 0 A17.25 17.25 0 0 0 18 17.25" stroke="#3a3b40" stroke-width="1.5"/></svg>
<svg style="position:absolute;left:2862.00px;top:1490.00px;" width="18.00" height="18.00" viewBox="0 0 18 18" fill="none"><path d="M18 0 V18 H0 V17.25 A17.25 17.25 0 0 0 17.25 0 Z" fill="#0b0d0c"/><path d="M17.25 0 A17.25 17.25 0 0 1 0 17.25" stroke="#3a3b40" stroke-width="1.5"/></svg>
</body></html>
